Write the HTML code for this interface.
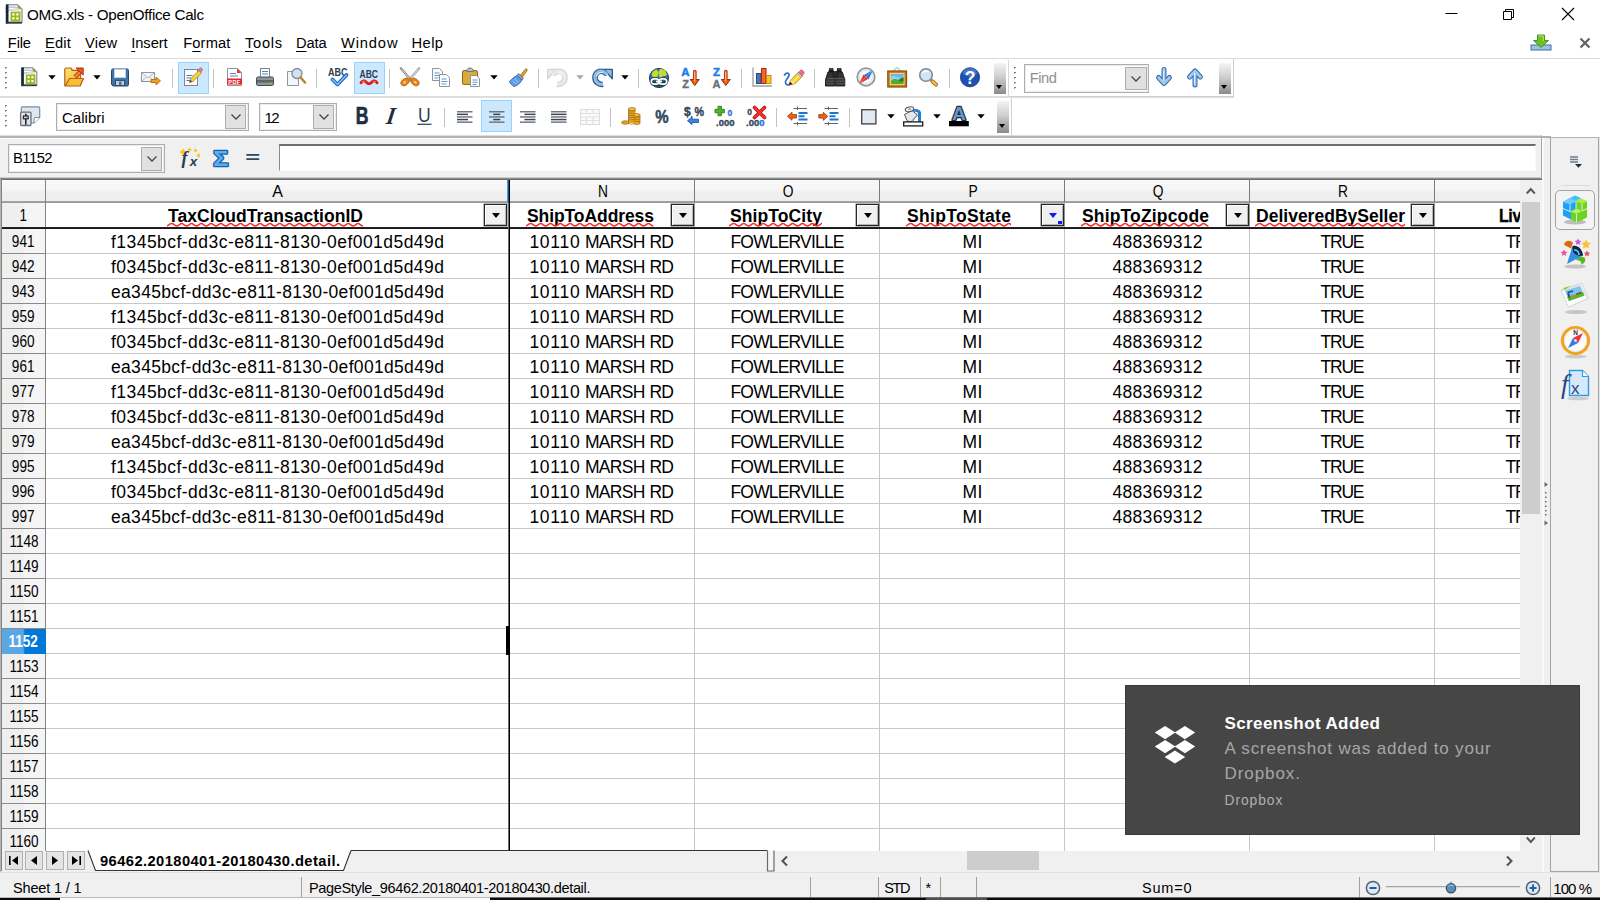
<!DOCTYPE html>
<html><head><meta charset="utf-8"><title>OMG.xls - OpenOffice Calc</title>
<style>
*{box-sizing:border-box;margin:0;padding:0}
html,body{width:1600px;height:900px;overflow:hidden;background:#fff}
body{position:relative;font-family:"Liberation Sans",sans-serif;color:#000;font-size:15px}
.a{position:absolute}
.t{position:absolute;white-space:nowrap;line-height:1}
u{text-decoration:underline;text-underline-offset:2.6px;text-decoration-thickness:1px}
#titlebar{left:0;top:0;width:1600px;height:30px;background:#fff}
#menubar{left:0;top:30px;width:1600px;height:28px;background:#fff}
.menu{top:36px;font-size:14.6px}
#tb1{left:0;top:59px;width:1600px;height:38px;background:#fff}
#tb2{left:0;top:96px;width:1600px;height:40px;background:#fff}
#tbl{left:0;top:96px;width:1234px;height:2px;background:#dedede}
#fbar{left:0;top:135px;width:1542px;height:45px;background:#f0f0f0;border-top:1px solid #dedede;border-right:1px solid #a8a8a8;box-shadow:inset 0 2px 0 #b2b2b2,inset 0 3px 0 #fff}
.sep{position:absolute;width:1px;background:#c2c2c2}
.hl{position:absolute;background:#cce8ff;border:1px solid #99d1ff}
.combo{position:absolute;background:#fff;border:1px solid #abaeb5;box-shadow:inset 0 0 0 1px #ececec}
.cbtn{position:absolute;background:#e1e1e1;border:1px solid #adadad}
.cbtn svg{position:absolute;left:50%;top:50%;transform:translate(-50%,-50%)}
.ic{position:absolute;overflow:visible}
.grip{position:absolute;width:3px}
.ovf{position:absolute;width:12px;background:linear-gradient(#f4f4f4,#cfcfcf 45%,#8a8a8a)}
.ovf:after{content:"";position:absolute;left:2.3px;bottom:5px;border:3.5px solid transparent;border-top:4px solid #000;border-bottom:0}
/* grid */
#grid{left:0;top:179px;width:1520px;height:672px;background:#fff;overflow:hidden}
.vl{position:absolute;width:1px;background:#c8c8c8}
.hln{position:absolute;height:1px;background:#c8c8c8}
.rh{position:absolute;left:2px;width:43px;height:24px;background:linear-gradient(90deg,#f0f0f0 0,#f0f0f0 48%,#f6f6f6 52%,#f6f6f6);border-bottom:0}
.rn{position:absolute;left:2px;width:43px;text-align:center;font-size:15.8px;line-height:1;white-space:nowrap;color:#000}
.rn span{display:inline-block;transform:scaleX(.86);transform-origin:50% 50%}
.ch{position:absolute;top:2px;height:21px;background:linear-gradient(#f6f6f6,#ececec);text-align:center;font-size:15.2px}
.c{position:absolute;white-space:nowrap;line-height:1;font-size:17.5px;text-align:center;color:#000}
.hd{position:absolute;white-space:nowrap;line-height:1;font-size:17.5px;font-weight:bold;color:#000}
.dd{position:absolute;width:23px;height:22px;background:#f0f0f0;border:1px solid #262626;box-shadow:0 0 0 .6px rgba(40,40,40,.55),inset 1px 1px 0 #fff,inset -1px -1px 0 #b5b5b5}
.dd:after{content:"";position:absolute;left:6.7px;top:7.6px;border:4.7px solid transparent;border-top:5.4px solid #000;border-bottom:0}
.dd.f:after{border-top-color:#1616ff}
.dd.f:before{content:"";position:absolute;right:1px;bottom:1px;width:4px;height:3.5px;background:#1616ff}
.wv{position:absolute}
.sb{font-size:14.6px}
.sbd{position:absolute;top:877px;width:1px;height:20px;background:#a0a0a0}
</style></head><body>

<div class="a" id="titlebar"></div>
<svg class="ic" style="left:1440px;top:4px" width="150" height="22" viewBox="0 0 150 22">
<path d="M5.5 9.5h12" stroke="#000" stroke-width="1" fill="none"/>
<path d="M63.5 7.5h8v8h-8zM65.5 7.5v-2h8v8h-2" stroke="#000" stroke-width="1" fill="none"/>
<path d="M122 4l12 12M134 4l-12 12" stroke="#000" stroke-width="1.1" fill="none"/>
</svg>
<div class="a" id="menubar"></div>
<div class="a" id="tb1"></div><div class="a" id="tb2"></div><div class="a" id="tbl"></div><div class="a" id="fbar"></div>
<svg class="ic" style="left:5px;top:4px" width="18" height="20" viewBox="0 0 18 20">
<path d="M1.500 .8h11.500l4 4v14.200h-15.500z" fill="#fdfdfd" stroke="#6d7780" stroke-width="1"/>
<path d="M12.500 .8l4.500 4.500h-4.500z" fill="#8aa626"/>
<path d="M0 4.500c4-1.500 8-2 12.500-.5M0 8c4-2.500 8-3 14-1.500" fill="none" stroke="#c3cbd2" stroke-width="1.600"/>
<rect x=".8" y=".5" width="2.700" height="19" fill="#10243b"/>
<rect x=".8" y="17.700" width="16" height="1.800" fill="#2b3b4c"/>
<rect x="5.500" y="7.500" width="10" height="10" fill="#9ab81c"/>
<path d="M5.500 7.500c2-2.500 6-3.500 10-2.500v2.500z" fill="#dfe5ea" opacity=".85"/>
<rect x="7.300" y="9.300" width="2.200" height="2.200" fill="#fff"/><rect x="11.300" y="9.300" width="2.200" height="2.200" fill="#fff"/>
<rect x="7.300" y="13.300" width="2.200" height="2.200" fill="#fff"/><rect x="11.300" y="13.300" width="2.200" height="2.200" fill="#fff"/>
</svg>
<svg class="ic" style="left:1530px;top:34px" width="22" height="18" viewBox="0 0 22 18">
<rect x="1" y="11" width="20" height="5" fill="#9cc3e6" stroke="#3f6f9f"/>
<path d="M7.500 1h7v5.500h4l-7.500 7-7.500-7h4z" fill="#6cc024" stroke="#3f8f12" stroke-width=".9" stroke-linejoin="round"/>
<path d="M8.700 2h4.600v5" fill="none" stroke="#b6e67a" stroke-width="1"/>
</svg>
<svg class="ic" style="left:1579px;top:37px" width="12" height="12" viewBox="0 0 12 12"><path d="M1.500 1.500l9 9M10.500 1.500l-9 9" stroke="#5d6770" stroke-width="2.300"/></svg>
<div class="a" style="left:0;top:58px;width:1600px;height:1px;background:#dadada"></div>
<svg class="ic" style="left:5px;top:67px" width="3" height="25" viewBox="0 0 3 25"><rect x="0" y="0" width="2" height="1" fill="#7c7c7c"/><rect x="0" y="1" width="1" height="1" fill="#a2a2a2"/><rect x="0" y="5" width="2" height="1" fill="#7c7c7c"/><rect x="0" y="6" width="1" height="1" fill="#a2a2a2"/><rect x="0" y="10" width="2" height="1" fill="#7c7c7c"/><rect x="0" y="11" width="1" height="1" fill="#a2a2a2"/><rect x="0" y="15" width="2" height="1" fill="#7c7c7c"/><rect x="0" y="16" width="1" height="1" fill="#a2a2a2"/><rect x="0" y="20" width="2" height="1" fill="#7c7c7c"/><rect x="0" y="21" width="1" height="1" fill="#a2a2a2"/></svg>
<svg class="ic" style="left:19px;top:67px" width="20" height="20" viewBox="0 0 20 20">
<g transform="translate(1.5 0) scale(.96 .98)">
<path d="M1.500 .8h11.500l4 4v14.200h-15.500z" fill="#fdfdfd" stroke="#6d7780" stroke-width="1"/>
<path d="M12.500 .8l4.500 4.500h-4.500z" fill="#8aa626"/>
<path d="M0 4.500c4-1.500 8-2 12.500-.5M0 8c4-2.500 8-3 14-1.500" fill="none" stroke="#c3cbd2" stroke-width="1.600"/>
<rect x=".8" y=".5" width="2.700" height="19" fill="#10243b"/>
<rect x=".8" y="17.700" width="16" height="1.800" fill="#2b3b4c"/>
<rect x="5.500" y="7.500" width="10" height="10" fill="#9ab81c"/>
<path d="M5.500 7.500c2-2.500 6-3.500 10-2.500v2.500z" fill="#dfe5ea" opacity=".85"/>
<rect x="7.300" y="9.300" width="2.200" height="2.200" fill="#fff"/><rect x="11.300" y="9.300" width="2.200" height="2.200" fill="#fff"/>
<rect x="7.300" y="13.300" width="2.200" height="2.200" fill="#fff"/><rect x="11.300" y="13.300" width="2.200" height="2.200" fill="#fff"/>
</g>
</svg>
<svg class="ic" style="left:48px;top:75px" width="8" height="5" viewBox="0 0 8 5"><path d="M0.3 0.3h7.4L4 4.4z" fill="#000"/></svg>
<svg class="ic" style="left:64px;top:67px" width="20" height="20" viewBox="0 0 20 20">
<defs><linearGradient id="gfo" x1="0" y1="0" x2="1" y2="1"><stop offset="0" stop-color="#fde77a"/><stop offset="1" stop-color="#f3ad24"/></linearGradient></defs>
<path d="M.8 2.500c0-1 .5-1.500 1.500-1.500h4.200c1 0 1.500.5 1.500 1.500v.8h7c1 0 1.500.5 1.500 1.500v13.700h-15.700z" fill="url(#gfo)" stroke="#b35f14" stroke-width="1.200"/>
<path d="M1.200 19l4.300-7.500h14l-3.500 7.500z" fill="#f7c034" stroke="#b35f14" stroke-width="1.200" stroke-linejoin="round"/>
<path d="M11 10l6-6" stroke="#c8401a" stroke-width="4.200"/>
<path d="M11 10l6-6" stroke="#f58a3c" stroke-width="2"/>
<path d="M12 1h7.200v7.200z" fill="#e85a22" stroke="#b5321a" stroke-width="1" stroke-linejoin="round"/>
</svg>
<svg class="ic" style="left:93px;top:75px" width="8" height="5" viewBox="0 0 8 5"><path d="M0.3 0.3h7.4L4 4.4z" fill="#000"/></svg>
<svg class="ic" style="left:110px;top:67px" width="20" height="20" viewBox="0 0 20 20">
<path d="M1.500 3.500c0-1 .5-1.500 1.500-1.500h14c1 0 1.500.5 1.500 1.500v14c0 1-.5 1.500-1.500 1.500h-14l-1.500-1.500z" fill="#3f73a6" stroke="#1f4a75"/>
<rect x="4.500" y="2.500" width="11" height="8" fill="#fff" stroke="#c5d3e0"/>
<rect x="5.500" y="13.500" width="9" height="5" fill="#c9ccd0" stroke="#2a527c"/>
<rect x="9" y="14.500" width="2.500" height="3.500" fill="#3f73a6"/>
</svg>
<svg class="ic" style="left:141px;top:67px" width="20" height="20" viewBox="0 0 20 20">
<rect x="0.500" y="5.500" width="13" height="9" fill="#f2f4f6" stroke="#8e979f"/>
<path d="M1 6l6 5 6-5M1 14l4.500-4M13 14l-4.500-4" fill="none" stroke="#a9b1b8" stroke-width=".9"/>
<path d="M10 12.500h5v-2.500l4.500 4-4.500 4v-2.500h-5z" fill="#f2a01e" stroke="#b46a0c" stroke-width=".9"/>
</svg>
<div class="sep" style="left:172px;top:69px;height:19px"></div>
<div class="hl" style="left:178px;top:62px;width:31px;height:32px"></div>
<svg class="ic" style="left:183px;top:67px" width="20" height="20" viewBox="0 0 20 20">
<rect x="1.500" y="2.500" width="13" height="16" fill="#fbfbfb" stroke="#7c8792"/>
<path d="M3.500 8.500h6M3.500 11h5M3.500 13.500h4" stroke="#3a7fc4" stroke-width="1.200"/>
<path d="M6.500 15.500l1.200-3.700 8.300-8.300 2.500 2.500-8.300 8.300z" fill="#f6d33b" stroke="#a8801a" stroke-width=".8"/>
<path d="M15.200 2.700l1.300-1.300c.7-.7 1.600-.7 2.300 0s.9 1.600.2 2.300l-1.300 1.300z" fill="#ee7d8c" stroke="#b84c5a" stroke-width=".7"/>
<path d="M6.500 15.500l.9-2.600 1.700 1.700z" fill="#3a2b1a"/>
</svg>
<div class="sep" style="left:213px;top:69px;height:19px"></div>
<svg class="ic" style="left:225px;top:67px" width="20" height="20" viewBox="0 0 20 20">
<path d="M2.500 1.500h10l4 4v13h-14z" fill="#fff" stroke="#8b949c"/>
<path d="M12 1.500l4.500 4.500h-4.500z" fill="#e5342b"/>
<path d="M5 6.500h6M5 9h8" stroke="#4d8ccc" stroke-width="1.200"/>
<rect x="2" y="11.500" width="15" height="6" fill="#e8242a"/>
<text x="9.500" y="16.600" font-family="Liberation Sans,sans-serif" font-size="5.600" font-weight="bold" fill="#fff" text-anchor="middle" letter-spacing=".4">PDF</text>
</svg>
<svg class="ic" style="left:255px;top:67px" width="20" height="20" viewBox="0 0 20 20">
<rect x="5.500" y="1.500" width="9" height="9" fill="#fff" stroke="#7e8790"/>
<path d="M7 4.500h6M7 7h6" stroke="#4a8bcf" stroke-width="1.200"/>
<path d="M1.500 11.500c0-1 .5-1.500 1.500-1.500h14c1 0 1.500.5 1.500 1.500v5.500c0 1-.5 1.500-1.500 1.500h-14c-1 0-1.500-.5-1.500-1.500z" fill="#8d949a" stroke="#454b50"/>
<rect x="2" y="13" width="16" height="2.500" fill="#5d6368"/>
<rect x="14.500" y="15.800" width="2" height="1.500" fill="#6fe02a"/>
</svg>
<svg class="ic" style="left:286px;top:67px" width="20" height="20" viewBox="0 0 20 20">
<path d="M1.500 4.500h8l3 3v11h-11z" fill="#f4f6f8" stroke="#8d969e"/>
<circle cx="11" cy="6.500" r="5" fill="#cfe3f5" stroke="#7f8a94" stroke-width="1.300"/>
<path d="M14.500 10.500l4.500 5" stroke="#b8862b" stroke-width="2.600" stroke-linecap="round"/>
</svg>
<div class="sep" style="left:316px;top:69px;height:19px"></div>
<svg class="ic" style="left:328px;top:67px" width="20" height="20" viewBox="0 0 20 20">
<text x="0" y="9" font-family="Liberation Sans,sans-serif" font-size="10.500" font-weight="bold" fill="#2c3e50" textLength="19.500" lengthAdjust="spacingAndGlyphs">ABC</text>
<path d="M4.500 12.500l5 5 9-9.500" fill="none" stroke="#1f66c8" stroke-width="3.800" stroke-linecap="round" stroke-linejoin="round"/>
<path d="M4.500 12.500l5 5 9-9.500" fill="none" stroke="#7cc4fa" stroke-width="1.500" stroke-linecap="round" stroke-linejoin="round"/>
</svg>
<div class="hl" style="left:354px;top:62px;width:31px;height:32px"></div>
<svg class="ic" style="left:359px;top:67px" width="20" height="20" viewBox="0 0 20 20">
<text x="0.500" y="10.800" font-family="Liberation Sans,sans-serif" font-size="10" font-weight="bold" fill="#2c3e50" textLength="18.500" lengthAdjust="spacingAndGlyphs">ABC</text>
<path d="M2 15.800c1.500-2.300 3.500-2.300 5-.8s2 1.800 3 1.800 1.500-.3 3-1.800 3.500-1.500 5 .8" fill="none" stroke="#e01818" stroke-width="2.800" stroke-linecap="round"/>
<path d="M3 15c1.500-1.300 2.500-1 3.500-.3M13.500 14.700c1.200-.8 2.500-.8 3.500.3" fill="none" stroke="#ff7a5a" stroke-width="1"/>
</svg>
<div class="sep" style="left:389px;top:69px;height:19px"></div>
<svg class="ic" style="left:400px;top:67px" width="20" height="20" viewBox="0 0 20 20">
<path d="M1 1.500l10 11.500" stroke="#8a9197" stroke-width="2.600" stroke-linecap="round"/>
<path d="M19 1.500l-10 11.500" stroke="#a5abb0" stroke-width="2.600" stroke-linecap="round"/>
<path d="M1.300 1.800l8 9.300M18.700 1.800l-8 9.300" stroke="#e3e6e8" stroke-width=".8"/>
<ellipse cx="5" cy="15" rx="4.600" ry="3.200" transform="rotate(-38 5 15)" fill="#e8861a" stroke="#b8610c" stroke-width=".8"/>
<ellipse cx="15" cy="15" rx="4.600" ry="3.200" transform="rotate(38 15 15)" fill="#e8861a" stroke="#b8610c" stroke-width=".8"/>
<ellipse cx="4.700" cy="15.300" rx="1.500" ry="1" transform="rotate(-38 4.700 15.300)" fill="#f7d9b0"/>
<ellipse cx="15.300" cy="15.300" rx="1.500" ry="1" transform="rotate(38 15.300 15.300)" fill="#f7d9b0"/>
<path d="M8 12l2-2 2 2-2 2z" fill="#d87914"/>
</svg>
<svg class="ic" style="left:431px;top:67px" width="20" height="20" viewBox="0 0 20 20">
<path d="M1.500 1.500h7l3 3v9h-10z" fill="#fdfdfd" stroke="#8c959d"/>
<path d="M3.500 6h5M3.500 8.500h5M3.500 11h4" stroke="#5b9ad5" stroke-width="1.100"/>
<path d="M8.500 7.500h7l3 3v9h-10z" fill="#fdfdfd" stroke="#8c959d"/>
<path d="M10.500 12h5M10.500 14.500h6M10.500 17h5" stroke="#5b9ad5" stroke-width="1.100"/>
</svg>
<svg class="ic" style="left:461px;top:67px" width="20" height="20" viewBox="0 0 20 20">
<rect x="1.500" y="3.500" width="15" height="14" rx="1.500" fill="#d9a93a" stroke="#8f6a1c"/>
<path d="M5.500 4.500c0-2 1.500-3.500 3.500-3.500s3.500 1.500 3.500 3.500z" fill="#b9bfc5" stroke="#6d757c"/>
<path d="M9.500 8.500h6l3 3v8h-9z" fill="#fdfdfd" stroke="#8c959d"/>
<path d="M11.500 13h5M11.500 15.300h5M11.500 17.500h4" stroke="#5b9ad5" stroke-width="1.100"/>
</svg>
<svg class="ic" style="left:490px;top:75px" width="8" height="5" viewBox="0 0 8 5"><path d="M0.3 0.3h7.4L4 4.4z" fill="#000"/></svg>
<svg class="ic" style="left:508px;top:67px" width="20" height="20" viewBox="0 0 20 20">
<path d="M12.500 8l5.500-6.500 1.500 1.500-5 7z" fill="#d9a62c" stroke="#94701a" stroke-width=".8"/>
<path d="M10.500 6.500l5 4.500-1.500 2-5-4.500z" fill="#9aa3ab" stroke="#5e666d" stroke-width=".8"/>
<path d="M9 8.500l5 4.500c-2 3.500-5 6-8 6.500-2-1-4-3-4.500-5 2-2.500 4.500-4.500 7.500-6z" fill="#5e9fe6" stroke="#2f69b0" stroke-width=".9"/>
<path d="M5 14l3 3M7 12l3.500 3.500" stroke="#a9cdf5" stroke-width=".9"/>
</svg>
<div class="sep" style="left:538px;top:69px;height:19px"></div>
<svg class="ic" style="left:548px;top:67px" width="20" height="20" viewBox="0 0 20 20"><g transform="translate(20 0) scale(-1 1)">
<path d="M11 17.200c-4.500.8-8-2.500-8-6.800 0-4.500 4.500-7.500 9-5.500l3 2.500" fill="none" stroke="#d2d5d8" stroke-width="5.600" stroke-linejoin="round"/>
<path d="M12 2.300h8.300v9.500z" fill="#e8eaec" stroke="#d2d5d8" stroke-width="1.300" stroke-linejoin="round"/>
<path d="M11 17.200c-4.500.8-8-2.500-8-6.800 0-4.500 4.500-7.500 9-5.500l3.500 3" fill="none" stroke="#e8eaec" stroke-width="3.400"/>
<path d="M4.500 9.500c.5-3 3.500-4.800 6.500-4" fill="none" stroke="#f4f5f6" stroke-width="1.200"/>
</g></svg>
<svg class="ic" style="left:576px;top:75px" width="8" height="5" viewBox="0 0 8 5"><path d="M0.3 0.3h7.4L4 4.4z" fill="#a8a8a8"/></svg>
<svg class="ic" style="left:592px;top:67px" width="20" height="20" viewBox="0 0 20 20">
<path d="M11 17.200c-4.500.8-8-2.500-8-6.800 0-4.500 4.500-7.500 9-5.500l3 2.500" fill="none" stroke="#2d5a87" stroke-width="5.600" stroke-linejoin="round"/>
<path d="M12 2.300h8.300v9.500z" fill="#8dbde8" stroke="#2d5a87" stroke-width="1.300" stroke-linejoin="round"/>
<path d="M11 17.200c-4.500.8-8-2.500-8-6.800 0-4.500 4.500-7.500 9-5.500l3.500 3" fill="none" stroke="#8dbde8" stroke-width="3.400"/>
<path d="M4.500 9.500c.5-3 3.500-4.800 6.500-4" fill="none" stroke="#d4e8fa" stroke-width="1.200"/>
</svg>
<svg class="ic" style="left:621px;top:75px" width="8" height="5" viewBox="0 0 8 5"><path d="M0.3 0.3h7.4L4 4.4z" fill="#000"/></svg>
<div class="sep" style="left:638px;top:69px;height:19px"></div>
<svg class="ic" style="left:649px;top:67px" width="20" height="20" viewBox="0 0 20 20">
<g transform="translate(0 1)">
<circle cx="10" cy="10" r="9.600" fill="#2f6fb8" stroke="#1d3f66" stroke-width="1"/>
<path d="M2.500 6c1-2.500 3-4 5-4.500l2 2.500 1.500-3c2 0 4 .5 5.500 2l1.500 3.500c-1 1.500-2.500 2-4 1.500l-1.500 1.500c-1.500.5-3 0-3.500-1.500l-2 1.500c-2 .5-3.500-.5-4.500-3.500z" fill="#c3de2a"/>
<path d="M9.500 4l1 5-1 2.500-.8-3.500z" fill="#3f86d1"/>
<path d="M2 13c1 3 3.500 5.500 8 6.500 4.500-1 7-3.500 8-6.500z" fill="#1f4a2a" opacity=".8"/>
<rect x="2.300" y="10.800" width="7.500" height="5.400" rx="2.700" fill="none" stroke="#22384f" stroke-width="3"/>
<rect x="10.200" y="10.800" width="7.500" height="5.400" rx="2.700" fill="none" stroke="#22384f" stroke-width="3"/>
<rect x="2.300" y="10.800" width="7.500" height="5.400" rx="2.700" fill="none" stroke="#fff" stroke-width="1.700"/>
<rect x="10.200" y="10.800" width="7.500" height="5.400" rx="2.700" fill="none" stroke="#fff" stroke-width="1.700"/>
<path d="M7 13.500h6" stroke="#fff" stroke-width="1.700"/>
</g>
</svg>
<svg class="ic" style="left:681px;top:67px" width="20" height="20" viewBox="0 0 20 20">
<text x="4.500" y="9.300" font-family="Liberation Sans,sans-serif" font-size="11.500" font-weight="bold" fill="#1880e8" stroke="#1880e8" stroke-width=".5" text-anchor="middle">A</text>
<text x="4.500" y="20.500" font-family="Liberation Sans,sans-serif" font-size="11" font-weight="bold" fill="#66717b" stroke="#66717b" stroke-width=".4" text-anchor="middle">Z</text>

<path d="M13.800 4.500v10" stroke="#a3280c" stroke-width="3.600" stroke-linecap="round"/>
<path d="M9.300 12.500l4.500 6 4.500-6z" fill="#e0521a" stroke="#a3280c" stroke-width="1" stroke-linejoin="round"/>
<path d="M13.800 4.500v11" stroke="#f5761f" stroke-width="2" stroke-linecap="round"/>
<path d="M13.600 5v9" stroke="#ffd9b0" stroke-width=".7"/>
</svg>
<svg class="ic" style="left:712px;top:67px" width="20" height="20" viewBox="0 0 20 20">
<text x="4.500" y="9.300" font-family="Liberation Sans,sans-serif" font-size="11.500" font-weight="bold" fill="#1880e8" stroke="#1880e8" stroke-width=".5" text-anchor="middle">Z</text>
<text x="4.500" y="20.500" font-family="Liberation Sans,sans-serif" font-size="11" font-weight="bold" fill="#66717b" stroke="#66717b" stroke-width=".4" text-anchor="middle">A</text>

<path d="M13.800 4.500v10" stroke="#a3280c" stroke-width="3.600" stroke-linecap="round"/>
<path d="M9.300 12.500l4.500 6 4.500-6z" fill="#e0521a" stroke="#a3280c" stroke-width="1" stroke-linejoin="round"/>
<path d="M13.800 4.500v11" stroke="#f5761f" stroke-width="2" stroke-linecap="round"/>
<path d="M13.600 5v9" stroke="#ffd9b0" stroke-width=".7"/>
</svg>
<div class="sep" style="left:741px;top:69px;height:19px"></div>
<svg class="ic" style="left:752px;top:67px" width="20" height="20" viewBox="0 0 20 20">
<path d="M1 0.500v18.500h19" fill="none" stroke="#9aa1a8" stroke-width="1.300"/>
<rect x="4.500" y="6.500" width="4.500" height="10" fill="#3f78b5" stroke="#264f7d"/>
<rect x="9.500" y="1.500" width="4.500" height="15" fill="#f26a1b" stroke="#b31e14"/>
<rect x="14.500" y="8.500" width="4.500" height="8" fill="#f7c62f" stroke="#c48e12"/>
</svg>
<svg class="ic" style="left:783px;top:67px" width="20" height="20" viewBox="0 0 20 20">
<path d="M1.500 8c1.500-2.500 5-2.500 4.500.5s-4.500 4.500-3.500 7.500 4 2 6 .5" fill="none" stroke="#2d6fd1" stroke-width="1.700" stroke-linecap="round"/>
<path d="M6 18l1.500-4.800 8-8 4 4-8 8z" fill="#f7d52e" stroke="#a8801a" stroke-width=".8"/>
<path d="M9.500 15.500l8-8" stroke="#fbe98a" stroke-width="1.200"/>
<path d="M14.300 6.400l1.200-1.200 4 4-1.200 1.200z" fill="#c9cdd1" stroke="#7f868c" stroke-width=".5"/>
<path d="M15.500 5.200l1.500-1.500c.8-.8 2-.8 2.900 0l.6.600c.8.900.8 2.100 0 2.900l-1.500 1.500z" fill="#ee6d83" stroke="#b84c5a" stroke-width=".7"/>
<path d="M6 18l1.100-3.600 2.500 2.500z" fill="#2a1c10"/>
<path d="M7.100 14.400l1-.8 3.400 3.400-.9.900z" fill="#f3dfc0"/>
</svg>
<div class="sep" style="left:814px;top:69px;height:19px"></div>
<svg class="ic" style="left:825px;top:67px" width="20" height="20" viewBox="0 0 20 20">
<path d="M3.500 5l.7-4h4l.7 4zM11.500 5l.7-4h4l.7 4z" fill="#1e1f21"/>
<path d="M3 5h6.500l.3 14h-9.300v-6.500zM10.800 5h6.500l2.500 7.500v6.500h-9.300z" fill="#323437" stroke="#151617" stroke-width=".9" stroke-linejoin="round"/>
<rect x="8" y="4.500" width="4.500" height="5.500" fill="#2a2b2d" stroke="#151617" stroke-width=".6"/>
<path d="M1 14.200h8.500M10.800 14.200h8.700M1 16.800h8.500M10.800 16.800h8.700M2 11.500h7.500M10.800 11.500h8" stroke="#6a6d71" stroke-width=".7"/>
<path d="M4.500 2h3M12.500 2h3" stroke="#77797c" stroke-width=".8"/>
</svg>
<svg class="ic" style="left:856px;top:67px" width="20" height="20" viewBox="0 0 20 20">
<circle cx="10" cy="10" r="8.800" fill="#f6f8fa" stroke="#8f989f" stroke-width="1.700"/>
<circle cx="10" cy="10" r="6.800" fill="none" stroke="#c3c9ce" stroke-width="1.400" stroke-dasharray="1 1.670"/>
<path d="M17 3l-4.500 9.500-4.500-4.500z" fill="#2f6fe0"/>
<path d="M3 17l4.500-9.500 4.500 4.500z" fill="#f02a2a"/>
<path d="M17 3l-7 7M3 17l7-7" stroke="#fff" stroke-width=".6" opacity=".6"/>
</svg>
<svg class="ic" style="left:887px;top:67px" width="20" height="20" viewBox="0 0 20 20">
<path d="M6 4l4-3.500 4 3.500" fill="none" stroke="#9aa1a7" stroke-width="1"/>
<rect x=".8" y="4" width="18.700" height="16" fill="#c87f1e" stroke="#8b4e0e" stroke-width="1.200"/>
<rect x="3.300" y="6.500" width="13.700" height="11" fill="#8fd0f5" stroke="#f5cd72" stroke-width="1.100"/>
<path d="M4 10c2-1.500 4-1.500 6 0s4 .5 6.500-.5v-2.500h-12.500z" fill="#6cb8ee"/>
<path d="M4 14c2-2 4-2.500 6-1.500s4-.5 6.500-2v6.500h-12.500z" fill="#4fae2f"/>
<path d="M12 13c1.500-2 3-2.500 4.500-2.500v4h-4.500z" fill="#2f7a22"/>
</svg>
<svg class="ic" style="left:918px;top:67px" width="20" height="20" viewBox="0 0 20 20">
<circle cx="8" cy="8" r="6.300" fill="#cfe5f7" stroke="#7f8a94" stroke-width="1.600"/>
<path d="M4.500 6c1.500-2.300 4.500-2.500 6-.8" fill="none" stroke="#fff" stroke-width="1.300"/>
<path d="M12.500 12.500l2 2" stroke="#7f8a94" stroke-width="2"/>
<path d="M14.500 14.500l3.500 3" stroke="#a9741a" stroke-width="4.200" stroke-linecap="round"/>
<path d="M14.500 14.500l3.500 3" stroke="#f2c14a" stroke-width="2.200" stroke-linecap="round"/>
</svg>
<div class="sep" style="left:949px;top:69px;height:19px"></div>
<svg class="ic" style="left:960px;top:67px" width="20" height="20" viewBox="0 0 20 20">
<circle cx="10" cy="10.300" r="9.600" fill="#1f4fb0" stroke="#173a85" stroke-width=".8"/>
<ellipse cx="10" cy="5.500" rx="7" ry="4" fill="#5f8fe0" opacity=".6"/>
<text x="10" y="16.500" font-family="Liberation Sans,sans-serif" font-size="17.500" font-weight="bold" fill="#fff" text-anchor="middle">?</text>
</svg>
<div class="ovf" style="left:994px;top:63px;height:31px"></div>
<div class="a" style="left:1008px;top:60px;width:1px;height:37px;background:#d8d8d8"></div>
<div class="a" style="left:1009px;top:59px;width:225px;height:38px;border-right:1px solid #d0d0d0;border-bottom:1px solid #d0d0d0"></div>
<svg class="ic" style="left:1014px;top:67px" width="3" height="25" viewBox="0 0 3 25"><rect x="0" y="0" width="2" height="1" fill="#7c7c7c"/><rect x="0" y="1" width="1" height="1" fill="#a2a2a2"/><rect x="0" y="5" width="2" height="1" fill="#7c7c7c"/><rect x="0" y="6" width="1" height="1" fill="#a2a2a2"/><rect x="0" y="10" width="2" height="1" fill="#7c7c7c"/><rect x="0" y="11" width="1" height="1" fill="#a2a2a2"/><rect x="0" y="15" width="2" height="1" fill="#7c7c7c"/><rect x="0" y="16" width="1" height="1" fill="#a2a2a2"/><rect x="0" y="20" width="2" height="1" fill="#7c7c7c"/><rect x="0" y="21" width="1" height="1" fill="#a2a2a2"/></svg>
<div class="combo" style="left:1024px;top:64px;width:125px;height:29px"></div>
<div class="cbtn" style="left:1125px;top:67px;width:22px;height:23px"><svg width="11" height="7" viewBox="0 0 11 7"><path d="M1 1l4.5 4.5L10 1" fill="none" stroke="#444" stroke-width="1.3"/></svg></div>
<svg class="ic" style="left:1154px;top:67px" width="20" height="20" viewBox="0 0 20 20">
<path d="M10 2.500v10M4.500 10.500l5.500 6 5.500-6" fill="none" stroke="#3a6ea5" stroke-width="5" stroke-linecap="round" stroke-linejoin="round"/>
<path d="M10 2.500v10M4.500 10.500l5.500 6 5.500-6" fill="none" stroke="#9ecbf3" stroke-width="2.800" stroke-linecap="round" stroke-linejoin="round"/>
<path d="M9.500 3v11" stroke="#d8ecfc" stroke-width="1"/>
</svg>
<svg class="ic" style="left:1185px;top:67px" width="20" height="20" viewBox="0 0 20 20">
<path d="M10 18v-10M4.500 10l5.500-6 5.500 6" fill="none" stroke="#3a6ea5" stroke-width="5" stroke-linecap="round" stroke-linejoin="round"/>
<path d="M10 18v-10M4.500 10l5.500-6 5.500 6" fill="none" stroke="#9ecbf3" stroke-width="2.800" stroke-linecap="round" stroke-linejoin="round"/>
<path d="M9.500 17v-11" stroke="#d8ecfc" stroke-width="1"/>
</svg>
<div class="ovf" style="left:1219px;top:63px;height:31px"></div>
<svg class="ic" style="left:5px;top:105px" width="3" height="25" viewBox="0 0 3 25"><rect x="0" y="0" width="2" height="1" fill="#7c7c7c"/><rect x="0" y="1" width="1" height="1" fill="#a2a2a2"/><rect x="0" y="5" width="2" height="1" fill="#7c7c7c"/><rect x="0" y="6" width="1" height="1" fill="#a2a2a2"/><rect x="0" y="10" width="2" height="1" fill="#7c7c7c"/><rect x="0" y="11" width="1" height="1" fill="#a2a2a2"/><rect x="0" y="15" width="2" height="1" fill="#7c7c7c"/><rect x="0" y="16" width="1" height="1" fill="#a2a2a2"/><rect x="0" y="20" width="2" height="1" fill="#7c7c7c"/><rect x="0" y="21" width="1" height="1" fill="#a2a2a2"/></svg>
<svg class="ic" style="left:20px;top:106px" width="20" height="20" viewBox="0 0 20 20">
<path d="M2.500 .8h16c.7 0 1.200.5 1.200 1.200v9.500l-5.500 5.500h-11.700c-.7 0-1.200-.5-1.200-1.200v-13.800c0-.7.5-1.200 1.200-1.200z" fill="#dfe7ee" stroke="#7f8b99" stroke-width="1.200"/>
<path d="M14.200 17v-4.300c0-.7.5-1.200 1.200-1.200h4.300" fill="#fbfcfd" stroke="#7f8b99" stroke-width="1.100"/>
<path d="M14.800 16.200v-3.500c0-.4.300-.7.700-.7h3.500z" fill="#fff"/>
<rect x=".6" y="6.200" width="10.400" height="13.300" rx="1" fill="#dfe3e6" stroke="#66727f" stroke-width="1.300"/>
<path d="M5.800 8.300v10" stroke="#1b1f24" stroke-width="1.500" stroke-linecap="round"/>
<rect x="3.400" y="10" width="4.800" height="2.800" fill="#c9cdd1" stroke="#1b1f24" stroke-width="1.100"/>
</svg>
<div class="combo" style="left:56px;top:103px;width:193px;height:28px"></div>
<div class="cbtn" style="left:225px;top:105px;width:21px;height:24px"><svg width="11" height="7" viewBox="0 0 11 7"><path d="M1 1l4.5 4.5L10 1" fill="none" stroke="#444" stroke-width="1.3"/></svg></div>
<div class="combo" style="left:259px;top:103px;width:78px;height:28px"></div>
<div class="cbtn" style="left:313px;top:105px;width:21px;height:24px"><svg width="11" height="7" viewBox="0 0 11 7"><path d="M1 1l4.5 4.5L10 1" fill="none" stroke="#444" stroke-width="1.3"/></svg></div>
<svg class="ic" style="left:352px;top:106px" width="20" height="20" viewBox="0 0 20 20"><text x="0" y="18.200" font-family="Liberation Sans,sans-serif" font-size="23.200" font-weight="bold" fill="#1c2f42" stroke="#1c2f42" stroke-width=".7" transform="translate(3.800 0) scale(.76 1)">B</text></svg>
<svg class="ic" style="left:383px;top:106px" width="20" height="20" viewBox="0 0 20 20"><text x="0" y="18.200" font-family="Liberation Serif,serif" font-size="24.500" font-weight="bold" font-style="italic" fill="#1c2f42" transform="translate(5.500 0) skewX(-9) scale(.9 1)">I</text></svg>
<svg class="ic" style="left:414px;top:106px" width="20" height="20" viewBox="0 0 20 20"><text x="10.400" y="16" font-family="Liberation Sans,sans-serif" font-size="19.500" fill="#2a3f54" text-anchor="middle" transform="translate(10.400 0) scale(.9 1) translate(-10.400 0)">U</text><path d="M3.500 18.300h14" stroke="#2a3f54" stroke-width="1.200"/></svg>
<div class="sep" style="left:444px;top:108px;height:19px"></div>
<svg class="ic" style="left:455px;top:106px" width="20" height="20" viewBox="0 0 20 20"><rect x="2" y="5.00" width="15.5" height="1.500" fill="#70787f"/><rect x="2" y="7.60" width="11" height="1.500" fill="#3d4650"/><rect x="2" y="10.20" width="15.5" height="1.500" fill="#70787f"/><rect x="2" y="12.80" width="11" height="1.500" fill="#3d4650"/><rect x="2" y="15.40" width="15.5" height="1.500" fill="#70787f"/></svg>
<div class="hl" style="left:481px;top:100px;width:31px;height:32px"></div>
<svg class="ic" style="left:487px;top:106px" width="20" height="20" viewBox="0 0 20 20"><rect x="2.0" y="5.00" width="15.5" height="1.500" fill="#70787f"/><rect x="6.25" y="7.60" width="7" height="1.500" fill="#3d4650"/><rect x="2.0" y="10.20" width="15.5" height="1.500" fill="#70787f"/><rect x="6.25" y="12.80" width="7" height="1.500" fill="#3d4650"/><rect x="2.0" y="15.40" width="15.5" height="1.500" fill="#70787f"/></svg>
<svg class="ic" style="left:518px;top:106px" width="20" height="20" viewBox="0 0 20 20"><rect x="2.0" y="5.00" width="15.5" height="1.500" fill="#70787f"/><rect x="6.5" y="7.60" width="11" height="1.500" fill="#3d4650"/><rect x="2.0" y="10.20" width="15.5" height="1.500" fill="#70787f"/><rect x="6.5" y="12.80" width="11" height="1.500" fill="#3d4650"/><rect x="2.0" y="15.40" width="15.5" height="1.500" fill="#70787f"/></svg>
<svg class="ic" style="left:549px;top:106px" width="20" height="20" viewBox="0 0 20 20"><rect x="2" y="5.00" width="15.5" height="1.500" fill="#70787f"/><rect x="2" y="7.60" width="15.5" height="1.500" fill="#3d4650"/><rect x="2" y="10.20" width="15.5" height="1.500" fill="#70787f"/><rect x="2" y="12.80" width="15.5" height="1.500" fill="#3d4650"/><rect x="2" y="15.40" width="15.5" height="1.500" fill="#70787f"/></svg>
<svg class="ic" style="left:580px;top:106px" width="20" height="20" viewBox="0 0 20 20">
<rect x=".5" y="3.500" width="19" height="15" fill="#fafafa" stroke="#dcdcdc"/>
<path d="M.5 7.500h19M.5 11h19M.5 14.500h19M6.500 3.500v4M13 3.500v4M6.500 11v7.500M13 11v7.500" stroke="#e0e0e0" stroke-width="1.200"/>
</svg>
<div class="sep" style="left:610px;top:108px;height:19px"></div>
<svg class="ic" style="left:621px;top:106px" width="20" height="20" viewBox="0 0 20 20">
<ellipse cx="4.500" cy="16.500" rx="4" ry="1.700" fill="#e9a323" stroke="#a86f10" stroke-width=".8"/>
<rect x="7.500" y="3" width="7" height="14" fill="#eaa623"/>
<rect x="12.500" y="9" width="6.500" height="9" fill="#eaa623"/>
<path d="M7.500 5h7M7.500 7.200h7M7.500 9.400h7M7.500 11.600h7M7.500 13.800h7M12.500 11h6.500M12.500 13.200h6.500M12.500 15.400h6.500" stroke="#a86f10" stroke-width=".8"/>
<ellipse cx="11" cy="3" rx="3.500" ry="1.500" fill="#f7c654" stroke="#a86f10" stroke-width=".8"/>
<ellipse cx="15.800" cy="9" rx="3.300" ry="1.400" fill="#f7c654" stroke="#a86f10" stroke-width=".8"/>
<path d="M7.500 3v14c1 1.500 5 1.500 5 .5M19 9v8.500c-1 1.500-5.500 1.500-6.500 0" fill="none" stroke="#a86f10" stroke-width=".8"/>
</svg>
<svg class="ic" style="left:652px;top:106px" width="20" height="20" viewBox="0 0 20 20"><text x="10" y="17.500" font-family="Liberation Sans,sans-serif" font-size="17.500" font-weight="bold" fill="#33475a" stroke="#33475a" stroke-width=".5" text-anchor="middle" transform="translate(10 0) scale(.86 1) translate(-10 0)">%</text></svg>
<svg class="ic" style="left:684px;top:106px" width="20" height="20" viewBox="0 0 20 20">
<text x="0" y="10" font-family="Liberation Sans,sans-serif" font-size="12" font-weight="bold" fill="#33475a" stroke="#33475a" stroke-width=".4">$</text>
<text x="10.500" y="10" font-family="Liberation Sans,sans-serif" font-size="12" font-weight="bold" fill="#33475a" stroke="#33475a" stroke-width=".4" textLength="9.500" lengthAdjust="spacingAndGlyphs">%</text>
<text x="6.500" y="10.500" font-family="Liberation Sans,sans-serif" font-size="8" font-weight="bold" fill="#33475a">,</text>
<path d="M3.500 14.800l4.500-3.800v2.200h6.500v3.200h-6.500v2.200z" fill="#3d86e0" stroke="#1f55a3" stroke-width=".9" stroke-linejoin="round"/>
</svg>
<svg class="ic" style="left:715px;top:106px" width="20" height="20" viewBox="0 0 20 20">
<path d="M3 .3h3.400v3h3v3.400h-3v3h-3.400v-3h-3v-3.400h3z" fill="#4fb52a" stroke="#2c7d12" stroke-width=".9"/>
<text x="14.800" y="10" font-family="Liberation Sans,sans-serif" font-size="8.500" font-weight="bold" fill="#2f6fe0" stroke="#2f6fe0" stroke-width=".3" text-anchor="middle">0</text>
<text x="1" y="19.500" font-family="Liberation Sans,sans-serif" font-size="9" font-weight="bold" fill="#33475a" stroke="#33475a" stroke-width=".35" textLength="18.500" lengthAdjust="spacingAndGlyphs">.000</text>
</svg>
<svg class="ic" style="left:746px;top:106px" width="20" height="20" viewBox="0 0 20 20">
<text x="3.500" y="9" font-family="Liberation Sans,sans-serif" font-size="8.500" font-weight="bold" fill="#33475a" stroke="#33475a" stroke-width=".3" text-anchor="middle">0</text>
<text x="0" y="19.500" font-family="Liberation Sans,sans-serif" font-size="9" font-weight="bold" fill="#33475a" stroke="#33475a" stroke-width=".35" textLength="18.500" lengthAdjust="spacingAndGlyphs">.00<tspan fill="#2f6fe0" stroke="#2f6fe0">0</tspan></text>
<path d="M8.500 1.500l10 10M18.500 1.500l-10 10" stroke="#b81414" stroke-width="3.600" stroke-linecap="round"/>
<path d="M8.500 1.500l10 10M18.500 1.500l-10 10" stroke="#f03030" stroke-width="2.200" stroke-linecap="round"/>
</svg>
<div class="sep" style="left:776px;top:108px;height:19px"></div>
<svg class="ic" style="left:787px;top:106px" width="20" height="20" viewBox="0 0 20 20">
<path d="M10.500 .5v3.500M10.500 16v3.500" stroke="#5a6570" stroke-width="1"/>
<path d="M6.500 2.500h13.500M6.500 17.500h13.500" stroke="#5a6570" stroke-width="1"/>
<path d="M11.500 7h9M11.500 10.300h6M11.500 13.600h9" stroke="#1878d0" stroke-width="2"/>
<path d="M.5 10.300l4.500-4v2.300h4.500v3.400h-4.500v2.300z" fill="#e8641b" stroke="#a83f0a" stroke-width=".9" stroke-linejoin="round"/></svg>
<svg class="ic" style="left:818px;top:106px" width="20" height="20" viewBox="0 0 20 20">
<path d="M10.500 .5v3.500M10.500 16v3.500" stroke="#5a6570" stroke-width="1"/>
<path d="M6.500 2.500h13.500M6.500 17.500h13.500" stroke="#5a6570" stroke-width="1"/>
<path d="M11.500 7h9M11.500 10.300h6M11.500 13.600h9" stroke="#1878d0" stroke-width="2"/>
<path d="M9.800 10.300l-4.500-4v2.300h-4.500v3.400h4.500v2.300z" fill="#e8641b" stroke="#a83f0a" stroke-width=".9" stroke-linejoin="round"/></svg>
<div class="sep" style="left:849px;top:108px;height:19px"></div>
<svg class="ic" style="left:859px;top:106px" width="20" height="20" viewBox="0 0 20 20"><rect x="2.700" y="3.700" width="14.200" height="14.200" fill="#e3e9f0" stroke="#474c52" stroke-width="1.400"/></svg>
<svg class="ic" style="left:887px;top:114px" width="8" height="5" viewBox="0 0 8 5"><path d="M0.3 0.3h7.4L4 4.4z" fill="#000"/></svg>
<svg class="ic" style="left:903px;top:106px" width="20" height="20" viewBox="0 0 20 20">
<path d="M9.500 3.500c4-1.500 8 0 8.500 3v9.500h-3v-8c0-1.500-1.500-2.500-4-2z" fill="#2a7fc9"/>
<path d="M1.500 8.500l7.500-4 5.500 4.500-5 6c-1.500 1.200-4 .8-5.500-.5z" fill="#e6e9ec" stroke="#4b535b" stroke-width="1"/>
<path d="M8.500 14.500l5-5.800 1 .8-5 6z" fill="#9aa2a9"/>
<ellipse cx="6.500" cy="3.300" rx="4.300" ry="2.300" fill="#f4f6f7" stroke="#4b535b" stroke-width="1.100" transform="rotate(-12 6.500 3.300)"/>
<path d="M4.500 3.300l2-1 2 .8-2 1z" fill="#7d868e"/>
<rect x=".7" y="15.900" width="19" height="4" fill="#fff" stroke="#1a1a1a" stroke-width="1.300"/>
</svg>
<svg class="ic" style="left:933px;top:114px" width="8" height="5" viewBox="0 0 8 5"><path d="M0.3 0.3h7.4L4 4.4z" fill="#000"/></svg>
<svg class="ic" style="left:949px;top:106px" width="20" height="20" viewBox="0 0 20 20">
<text x="0" y="13.600" font-family="Liberation Sans,sans-serif" font-size="17.500" font-weight="bold" fill="#6b97c0" stroke="#17304a" stroke-width="2.300" stroke-linejoin="round" paint-order="stroke" transform="translate(3 0) scale(1.100 1)">A</text>
<rect x="0" y="15" width="19.800" height="5.300" fill="#000"/>
</svg>
<svg class="ic" style="left:977px;top:114px" width="8" height="5" viewBox="0 0 8 5"><path d="M0.3 0.3h7.4L4 4.4z" fill="#000"/></svg>
<div class="ovf" style="left:997px;top:101px;height:32px"></div>
<div class="a" style="left:1011px;top:98px;width:1px;height:38px;background:#d0d0d0"></div>
<div class="combo" style="left:8px;top:144px;width:157px;height:29px"></div>
<div class="cbtn" style="left:141px;top:147px;width:21px;height:24px"><svg width="11" height="7" viewBox="0 0 11 7"><path d="M1 1l4.5 4.5L10 1" fill="none" stroke="#444" stroke-width="1.3"/></svg></div>
<svg class="ic" style="left:179px;top:148px" width="20" height="20" viewBox="0 0 20 20">
<path d="M4 .8l3.200 3.200-3.200 3.200-3.200-3.200z" fill="#f7c81e"/>
<path d="M10.500-.8l1 1.800 2 .7-2 .7-1 1.800-1-1.800-2-.7 2-.7z" fill="#f7c81e"/>
<path d="M16.500 .5l2 2-2 2-2-2z" fill="#f7c81e"/>
<path d="M20 5l1.200 2.500-1.200 2.500-2.500-2.500z" fill="#f7c81e"/>
<text x="2.500" y="16.200" font-family="Liberation Serif,serif" font-size="18" font-style="italic" font-weight="bold" fill="#2b3d4f">f</text>
<text x="10.800" y="18" font-family="Liberation Sans,sans-serif" font-size="13.500" font-weight="bold" font-style="italic" fill="#2b3d4f">x</text>
</svg>
<svg class="ic" style="left:211px;top:148px" width="20" height="20" viewBox="0 0 20 20">
<text x="0" y="17.700" font-family="Liberation Sans,sans-serif" font-size="21.500" font-weight="bold" fill="#55b0f5" stroke="#1d5ea6" stroke-width="2.400" stroke-linejoin="round" paint-order="stroke" transform="translate(2.200 0) scale(1.160 1)">&#931;</text>
</svg>
<svg class="ic" style="left:244px;top:148px" width="20" height="20" viewBox="0 0 20 20"><text x="0" y="13.400" font-family="Liberation Sans,sans-serif" font-size="15" font-weight="bold" fill="#36475a" transform="translate(1.300 0) scale(1.700 1.150)" >=</text></svg>
<div class="a" style="left:279px;top:144px;width:1257px;height:27px;background:#fff;border:1px solid #8a8a8a;border-top:2px solid #6e6e6e;border-right-color:#f8f8f8;border-bottom-color:#f8f8f8"></div>
<div class="a" style="left:0;top:177px;width:1542px;height:1px;background:#cccccc"></div>
<div class="a" style="left:0;top:178px;width:1542px;height:1px;background:#8a8a8a"></div>
<div class="a" id="grid">
<div class="a" style="left:0;top:0px;width:1521px;height:1px;background:#6e6e6e"></div>
<div class="a" style="left:2px;top:1px;width:1519px;height:22px;background:linear-gradient(#f8f8f8 0,#f5f5f5 45%,#efefef 55%,#eeeeee 100%)"></div>
<div class="a" style="left:2px;top:24px;width:43px;height:648px;background:linear-gradient(90deg,#efefef 0,#efefef 48%,#f5f5f5 52%,#f5f5f5)"></div>
<div class="a" style="left:0;top:0px;width:1px;height:672px;background:#b4b4b4"></div>
<div class="a" style="left:1px;top:0px;width:1px;height:672px;background:#838383"></div>
<div class="hln" style="left:46px;top:74px;width:1475px"></div>
<div class="hln" style="left:46px;top:99px;width:1475px"></div>
<div class="hln" style="left:46px;top:124px;width:1475px"></div>
<div class="hln" style="left:46px;top:149px;width:1475px"></div>
<div class="hln" style="left:46px;top:174px;width:1475px"></div>
<div class="hln" style="left:46px;top:199px;width:1475px"></div>
<div class="hln" style="left:46px;top:224px;width:1475px"></div>
<div class="hln" style="left:46px;top:249px;width:1475px"></div>
<div class="hln" style="left:46px;top:274px;width:1475px"></div>
<div class="hln" style="left:46px;top:299px;width:1475px"></div>
<div class="hln" style="left:46px;top:324px;width:1475px"></div>
<div class="hln" style="left:46px;top:349px;width:1475px"></div>
<div class="hln" style="left:46px;top:374px;width:1475px"></div>
<div class="hln" style="left:46px;top:399px;width:1475px"></div>
<div class="hln" style="left:46px;top:424px;width:1475px"></div>
<div class="hln" style="left:46px;top:449px;width:1475px"></div>
<div class="hln" style="left:46px;top:474px;width:1475px"></div>
<div class="hln" style="left:46px;top:499px;width:1475px"></div>
<div class="hln" style="left:46px;top:524px;width:1475px"></div>
<div class="hln" style="left:46px;top:549px;width:1475px"></div>
<div class="hln" style="left:46px;top:574px;width:1475px"></div>
<div class="hln" style="left:46px;top:599px;width:1475px"></div>
<div class="hln" style="left:46px;top:624px;width:1475px"></div>
<div class="hln" style="left:46px;top:649px;width:1475px"></div>
<div class="hln" style="left:46px;top:674px;width:1475px"></div>
<div class="vl" style="left:694px;top:24px;height:648px"></div>
<div class="vl" style="left:879px;top:24px;height:648px"></div>
<div class="vl" style="left:1064px;top:24px;height:648px"></div>
<div class="vl" style="left:1249px;top:24px;height:648px"></div>
<div class="vl" style="left:1434px;top:24px;height:648px"></div>
<div class="a" style="left:2px;top:22px;width:1519px;height:1px;background:#a4a4a4"></div>
<div class="a" style="left:2px;top:23px;width:1519px;height:1px;background:#9a9a9a"></div>
<div class="a" style="left:694px;top:1px;width:1px;height:22px;background:#7a7a7a"></div>
<div class="a" style="left:879px;top:1px;width:1px;height:22px;background:#7a7a7a"></div>
<div class="a" style="left:1064px;top:1px;width:1px;height:22px;background:#7a7a7a"></div>
<div class="a" style="left:1249px;top:1px;width:1px;height:22px;background:#7a7a7a"></div>
<div class="a" style="left:1434px;top:1px;width:1px;height:22px;background:#7a7a7a"></div>
<div class="a" style="left:45px;top:1px;width:1px;height:671px;background:#838383"></div>
<div class="a" style="left:2px;top:48px;width:43px;height:1px;background:#8a8a8a"></div>
<div class="a" style="left:2px;top:74px;width:43px;height:1px;background:#8a8a8a"></div>
<div class="a" style="left:2px;top:99px;width:43px;height:1px;background:#8a8a8a"></div>
<div class="a" style="left:2px;top:124px;width:43px;height:1px;background:#8a8a8a"></div>
<div class="a" style="left:2px;top:149px;width:43px;height:1px;background:#8a8a8a"></div>
<div class="a" style="left:2px;top:174px;width:43px;height:1px;background:#8a8a8a"></div>
<div class="a" style="left:2px;top:199px;width:43px;height:1px;background:#8a8a8a"></div>
<div class="a" style="left:2px;top:224px;width:43px;height:1px;background:#8a8a8a"></div>
<div class="a" style="left:2px;top:249px;width:43px;height:1px;background:#8a8a8a"></div>
<div class="a" style="left:2px;top:274px;width:43px;height:1px;background:#8a8a8a"></div>
<div class="a" style="left:2px;top:299px;width:43px;height:1px;background:#8a8a8a"></div>
<div class="a" style="left:2px;top:324px;width:43px;height:1px;background:#8a8a8a"></div>
<div class="a" style="left:2px;top:349px;width:43px;height:1px;background:#8a8a8a"></div>
<div class="a" style="left:2px;top:374px;width:43px;height:1px;background:#8a8a8a"></div>
<div class="a" style="left:2px;top:399px;width:43px;height:1px;background:#8a8a8a"></div>
<div class="a" style="left:2px;top:424px;width:43px;height:1px;background:#8a8a8a"></div>
<div class="a" style="left:2px;top:449px;width:43px;height:1px;background:#8a8a8a"></div>
<div class="a" style="left:2px;top:474px;width:43px;height:1px;background:#8a8a8a"></div>
<div class="a" style="left:2px;top:499px;width:43px;height:1px;background:#8a8a8a"></div>
<div class="a" style="left:2px;top:524px;width:43px;height:1px;background:#8a8a8a"></div>
<div class="a" style="left:2px;top:549px;width:43px;height:1px;background:#8a8a8a"></div>
<div class="a" style="left:2px;top:574px;width:43px;height:1px;background:#8a8a8a"></div>
<div class="a" style="left:2px;top:599px;width:43px;height:1px;background:#8a8a8a"></div>
<div class="a" style="left:2px;top:624px;width:43px;height:1px;background:#8a8a8a"></div>
<div class="a" style="left:2px;top:649px;width:43px;height:1px;background:#8a8a8a"></div>
<div class="a" style="left:2px;top:674px;width:43px;height:1px;background:#8a8a8a"></div>
<div class="a" style="left:2px;top:450px;width:44px;height:25px;background:linear-gradient(90deg,#5aa7e6 0,#5aa7e6 48%,#0078d7 52%,#0078d7)"></div>
<div class="a" style="left:2px;top:48px;width:1519px;height:2px;background:linear-gradient(#2a2a2a,#111)"></div>
<div class="a" style="left:508px;top:24px;width:1px;height:648px;background:#6c6c6c"></div>
<div class="a" style="left:509px;top:24px;width:1px;height:648px;background:#000"></div>
<div class="a" style="left:507px;top:1px;width:1px;height:23px;background:#5b93cf"></div>
<div class="a" style="left:508px;top:1px;width:1px;height:23px;background:#1b518f"></div>
<div class="a" style="left:509px;top:1px;width:1px;height:23px;background:#000"></div>
<div class="a" style="left:506px;top:447px;width:4px;height:29px;background:#000"></div>
<div class="t" style="left:257.6px;width:40px;text-align:center;top:4.5px;font-size:16px;transform:scaleX(1)">A</div>
<div class="t" style="left:582.6px;width:40px;text-align:center;top:4.5px;font-size:16px;transform:scaleX(0.86)">N</div>
<div class="t" style="left:767.6px;width:40px;text-align:center;top:4.5px;font-size:16px;transform:scaleX(0.86)">O</div>
<div class="t" style="left:952.6px;width:40px;text-align:center;top:4.5px;font-size:16px;transform:scaleX(0.86)">P</div>
<div class="t" style="left:1137.6px;width:40px;text-align:center;top:4.5px;font-size:16px;transform:scaleX(0.86)">Q</div>
<div class="t" style="left:1322.6px;width:40px;text-align:center;top:4.5px;font-size:16px;transform:scaleX(0.86)">R</div>
<div class="rn" style="top:29px;color:#000"><span>1</span></div>
<div class="rn" style="top:55px;color:#000"><span>941</span></div>
<div class="rn" style="top:80px;color:#000"><span>942</span></div>
<div class="rn" style="top:105px;color:#000"><span>943</span></div>
<div class="rn" style="top:130px;color:#000"><span>959</span></div>
<div class="rn" style="top:155px;color:#000"><span>960</span></div>
<div class="rn" style="top:180px;color:#000"><span>961</span></div>
<div class="rn" style="top:205px;color:#000"><span>977</span></div>
<div class="rn" style="top:230px;color:#000"><span>978</span></div>
<div class="rn" style="top:255px;color:#000"><span>979</span></div>
<div class="rn" style="top:280px;color:#000"><span>995</span></div>
<div class="rn" style="top:305px;color:#000"><span>996</span></div>
<div class="rn" style="top:330px;color:#000"><span>997</span></div>
<div class="rn" style="top:355px;color:#000"><span>1148</span></div>
<div class="rn" style="top:380px;color:#000"><span>1149</span></div>
<div class="rn" style="top:405px;color:#000"><span>1150</span></div>
<div class="rn" style="top:430px;color:#000"><span>1151</span></div>
<div class="rn" style="top:455px;color:#fff;font-weight:bold"><span>1152</span></div>
<div class="rn" style="top:480px;color:#000"><span>1153</span></div>
<div class="rn" style="top:505px;color:#000"><span>1154</span></div>
<div class="rn" style="top:530px;color:#000"><span>1155</span></div>
<div class="rn" style="top:555px;color:#000"><span>1156</span></div>
<div class="rn" style="top:580px;color:#000"><span>1157</span></div>
<div class="rn" style="top:605px;color:#000"><span>1158</span></div>
<div class="rn" style="top:630px;color:#000"><span>1159</span></div>
<div class="rn" style="top:655px;color:#000"><span>1160</span></div>
<div class="hd" style="left:168px;top:28.5px;letter-spacing:0.042px">TaxCloudTransactionID</div>
<svg class="wv" style="left:167px;top:42.599999999999994px" width="196" height="6" viewBox="0 0 196 6"><path d="M0 4.1 S3.2 1.5 4.9 1.5 S8.100000000000001 4.1 9.8 4.1 S13.0 1.5 14.700000000000001 1.5 S17.900000000000002 4.1 19.6 4.1 S22.8 1.5 24.5 1.5 S27.7 4.1 29.4 4.1 S32.6 1.5 34.3 1.5 S37.5 4.1 39.199999999999996 4.1 S42.4 1.5 44.099999999999994 1.5 S47.3 4.1 48.99999999999999 4.1 S52.199999999999996 1.5 53.89999999999999 1.5 S57.099999999999994 4.1 58.79999999999999 4.1 S61.99999999999999 1.5 63.69999999999999 1.5 S66.89999999999999 4.1 68.6 4.1 S71.8 1.5 73.5 1.5 S76.7 4.1 78.4 4.1 S81.60000000000001 1.5 83.30000000000001 1.5 S86.50000000000001 4.1 88.20000000000002 4.1 S91.40000000000002 1.5 93.10000000000002 1.5 S96.30000000000003 4.1 98.00000000000003 4.1 S101.20000000000003 1.5 102.90000000000003 1.5 S106.10000000000004 4.1 107.80000000000004 4.1 S111.00000000000004 1.5 112.70000000000005 1.5 S115.90000000000005 4.1 117.60000000000005 4.1 S120.80000000000005 1.5 122.50000000000006 1.5 S125.70000000000006 4.1 127.40000000000006 4.1 S130.60000000000005 1.5 132.30000000000007 1.5 S135.50000000000006 4.1 137.20000000000007 4.1 S140.40000000000006 1.5 142.10000000000008 1.5 S145.30000000000007 4.1 147.00000000000009 4.1 S150.20000000000007 1.5 151.9000000000001 1.5 S155.10000000000008 4.1 156.8000000000001 4.1 S160.00000000000009 1.5 161.7000000000001 1.5 S164.9000000000001 4.1 166.6000000000001 4.1 S169.8000000000001 1.5 171.5000000000001 1.5 S174.7000000000001 4.1 176.40000000000012 4.1 S179.6000000000001 1.5 181.30000000000013 1.5 S184.5000000000001 4.1 186.20000000000013 4.1 S189.40000000000012 1.5 191.10000000000014 1.5 S194.30000000000013 4.1 196.00000000000014 4.1" fill="none" stroke="#ff2a2a" stroke-width="1.5"/></svg>
<div class="dd" style="left:484px;top:25px"></div>
<div class="hd" style="left:527px;top:28.5px;letter-spacing:-0.086px">ShipToAddress</div>
<svg class="wv" style="left:526px;top:42.599999999999994px" width="128" height="6" viewBox="0 0 128 6"><path d="M0 4.1 S3.2 1.5 4.9 1.5 S8.100000000000001 4.1 9.8 4.1 S13.0 1.5 14.700000000000001 1.5 S17.900000000000002 4.1 19.6 4.1 S22.8 1.5 24.5 1.5 S27.7 4.1 29.4 4.1 S32.6 1.5 34.3 1.5 S37.5 4.1 39.199999999999996 4.1 S42.4 1.5 44.099999999999994 1.5 S47.3 4.1 48.99999999999999 4.1 S52.199999999999996 1.5 53.89999999999999 1.5 S57.099999999999994 4.1 58.79999999999999 4.1 S61.99999999999999 1.5 63.69999999999999 1.5 S66.89999999999999 4.1 68.6 4.1 S71.8 1.5 73.5 1.5 S76.7 4.1 78.4 4.1 S81.60000000000001 1.5 83.30000000000001 1.5 S86.50000000000001 4.1 88.20000000000002 4.1 S91.40000000000002 1.5 93.10000000000002 1.5 S96.30000000000003 4.1 98.00000000000003 4.1 S101.20000000000003 1.5 102.90000000000003 1.5 S106.10000000000004 4.1 107.80000000000004 4.1 S111.00000000000004 1.5 112.70000000000005 1.5 S115.90000000000005 4.1 117.60000000000005 4.1 S120.80000000000005 1.5 122.50000000000006 1.5 S125.70000000000006 4.1 127.40000000000006 4.1" fill="none" stroke="#ff2a2a" stroke-width="1.5"/></svg>
<div class="dd" style="left:671px;top:25px"></div>
<div class="hd" style="left:730px;top:28.5px;letter-spacing:0.104px">ShipToCity</div>
<svg class="wv" style="left:729px;top:42.599999999999994px" width="93" height="6" viewBox="0 0 93 6"><path d="M0 4.1 S3.2 1.5 4.9 1.5 S8.100000000000001 4.1 9.8 4.1 S13.0 1.5 14.700000000000001 1.5 S17.900000000000002 4.1 19.6 4.1 S22.8 1.5 24.5 1.5 S27.7 4.1 29.4 4.1 S32.6 1.5 34.3 1.5 S37.5 4.1 39.199999999999996 4.1 S42.4 1.5 44.099999999999994 1.5 S47.3 4.1 48.99999999999999 4.1 S52.199999999999996 1.5 53.89999999999999 1.5 S57.099999999999994 4.1 58.79999999999999 4.1 S61.99999999999999 1.5 63.69999999999999 1.5 S66.89999999999999 4.1 68.6 4.1 S71.8 1.5 73.5 1.5 S76.7 4.1 78.4 4.1 S81.60000000000001 1.5 83.30000000000001 1.5 S86.50000000000001 4.1 88.20000000000002 4.1 S91.40000000000002 1.5 93.10000000000002 1.5" fill="none" stroke="#ff2a2a" stroke-width="1.5"/></svg>
<div class="dd" style="left:856px;top:25px"></div>
<div class="hd" style="left:907px;top:28.5px;letter-spacing:0.320px">ShipToState</div>
<svg class="wv" style="left:906px;top:42.599999999999994px" width="105" height="6" viewBox="0 0 105 6"><path d="M0 4.1 S3.2 1.5 4.9 1.5 S8.100000000000001 4.1 9.8 4.1 S13.0 1.5 14.700000000000001 1.5 S17.900000000000002 4.1 19.6 4.1 S22.8 1.5 24.5 1.5 S27.7 4.1 29.4 4.1 S32.6 1.5 34.3 1.5 S37.5 4.1 39.199999999999996 4.1 S42.4 1.5 44.099999999999994 1.5 S47.3 4.1 48.99999999999999 4.1 S52.199999999999996 1.5 53.89999999999999 1.5 S57.099999999999994 4.1 58.79999999999999 4.1 S61.99999999999999 1.5 63.69999999999999 1.5 S66.89999999999999 4.1 68.6 4.1 S71.8 1.5 73.5 1.5 S76.7 4.1 78.4 4.1 S81.60000000000001 1.5 83.30000000000001 1.5 S86.50000000000001 4.1 88.20000000000002 4.1 S91.40000000000002 1.5 93.10000000000002 1.5 S96.30000000000003 4.1 98.00000000000003 4.1 S101.20000000000003 1.5 102.90000000000003 1.5 S106.10000000000004 4.1 107.80000000000004 4.1" fill="none" stroke="#ff2a2a" stroke-width="1.5"/></svg>
<div class="dd f" style="left:1041px;top:25px"></div>
<div class="hd" style="left:1082px;top:28.5px;letter-spacing:0.159px">ShipToZipcode</div>
<svg class="wv" style="left:1081px;top:42.599999999999994px" width="128" height="6" viewBox="0 0 128 6"><path d="M0 4.1 S3.2 1.5 4.9 1.5 S8.100000000000001 4.1 9.8 4.1 S13.0 1.5 14.700000000000001 1.5 S17.900000000000002 4.1 19.6 4.1 S22.8 1.5 24.5 1.5 S27.7 4.1 29.4 4.1 S32.6 1.5 34.3 1.5 S37.5 4.1 39.199999999999996 4.1 S42.4 1.5 44.099999999999994 1.5 S47.3 4.1 48.99999999999999 4.1 S52.199999999999996 1.5 53.89999999999999 1.5 S57.099999999999994 4.1 58.79999999999999 4.1 S61.99999999999999 1.5 63.69999999999999 1.5 S66.89999999999999 4.1 68.6 4.1 S71.8 1.5 73.5 1.5 S76.7 4.1 78.4 4.1 S81.60000000000001 1.5 83.30000000000001 1.5 S86.50000000000001 4.1 88.20000000000002 4.1 S91.40000000000002 1.5 93.10000000000002 1.5 S96.30000000000003 4.1 98.00000000000003 4.1 S101.20000000000003 1.5 102.90000000000003 1.5 S106.10000000000004 4.1 107.80000000000004 4.1 S111.00000000000004 1.5 112.70000000000005 1.5 S115.90000000000005 4.1 117.60000000000005 4.1 S120.80000000000005 1.5 122.50000000000006 1.5 S125.70000000000006 4.1 127.40000000000006 4.1" fill="none" stroke="#ff2a2a" stroke-width="1.5"/></svg>
<div class="dd" style="left:1226px;top:25px"></div>
<div class="hd" style="left:1256px;top:28.5px;letter-spacing:0.010px">DeliveredBySeller</div>
<svg class="wv" style="left:1255px;top:42.599999999999994px" width="150" height="6" viewBox="0 0 150 6"><path d="M0 4.1 S3.2 1.5 4.9 1.5 S8.100000000000001 4.1 9.8 4.1 S13.0 1.5 14.700000000000001 1.5 S17.900000000000002 4.1 19.6 4.1 S22.8 1.5 24.5 1.5 S27.7 4.1 29.4 4.1 S32.6 1.5 34.3 1.5 S37.5 4.1 39.199999999999996 4.1 S42.4 1.5 44.099999999999994 1.5 S47.3 4.1 48.99999999999999 4.1 S52.199999999999996 1.5 53.89999999999999 1.5 S57.099999999999994 4.1 58.79999999999999 4.1 S61.99999999999999 1.5 63.69999999999999 1.5 S66.89999999999999 4.1 68.6 4.1 S71.8 1.5 73.5 1.5 S76.7 4.1 78.4 4.1 S81.60000000000001 1.5 83.30000000000001 1.5 S86.50000000000001 4.1 88.20000000000002 4.1 S91.40000000000002 1.5 93.10000000000002 1.5 S96.30000000000003 4.1 98.00000000000003 4.1 S101.20000000000003 1.5 102.90000000000003 1.5 S106.10000000000004 4.1 107.80000000000004 4.1 S111.00000000000004 1.5 112.70000000000005 1.5 S115.90000000000005 4.1 117.60000000000005 4.1 S120.80000000000005 1.5 122.50000000000006 1.5 S125.70000000000006 4.1 127.40000000000006 4.1 S130.60000000000005 1.5 132.30000000000007 1.5 S135.50000000000006 4.1 137.20000000000007 4.1 S140.40000000000006 1.5 142.10000000000008 1.5 S145.30000000000007 4.1 147.00000000000009 4.1 S150.20000000000007 1.5 151.9000000000001 1.5" fill="none" stroke="#ff2a2a" stroke-width="1.5"/></svg>
<div class="dd" style="left:1411px;top:25px"></div>
<div class="hd" style="left:1499px;top:28.5px;transform:scaleX(.92);transform-origin:0 0;letter-spacing:-.5px;-webkit-text-stroke:.35px #000">LiveTransaction</div>
<div class="c" style="left:111.0px;top:55px;letter-spacing:0.460px;text-align:left">f1345bcf-dd3c-e811-8130-0ef001d5d49d</div>
<div class="c" style="left:529.4px;top:55px;letter-spacing:0.731px;text-align:left">10110</div>
<div class="c" style="left:585.0px;top:55px;letter-spacing:-0.726px;text-align:left">MARSH</div>
<div class="c" style="left:649.6px;top:55px;letter-spacing:-0.881px;text-align:left">RD</div>
<div class="c" style="left:730.5px;top:55px;letter-spacing:-0.822px;text-align:left">FOWLERVILLE</div>
<div class="c" style="left:962.5px;top:55px;letter-spacing:0.547px;text-align:left">MI</div>
<div class="c" style="left:1112.5px;top:55px;letter-spacing:0.299px;text-align:left">488369312</div>
<div class="c" style="left:1320.5px;top:55px;letter-spacing:-1.214px;text-align:left">TRUE</div>
<div class="c" style="left:1505.5px;top:55px;letter-spacing:-1.214px;text-align:left">TRUE</div>
<div class="c" style="left:111.0px;top:80px;letter-spacing:0.460px;text-align:left">f0345bcf-dd3c-e811-8130-0ef001d5d49d</div>
<div class="c" style="left:529.4px;top:80px;letter-spacing:0.731px;text-align:left">10110</div>
<div class="c" style="left:585.0px;top:80px;letter-spacing:-0.726px;text-align:left">MARSH</div>
<div class="c" style="left:649.6px;top:80px;letter-spacing:-0.881px;text-align:left">RD</div>
<div class="c" style="left:730.5px;top:80px;letter-spacing:-0.822px;text-align:left">FOWLERVILLE</div>
<div class="c" style="left:962.5px;top:80px;letter-spacing:0.547px;text-align:left">MI</div>
<div class="c" style="left:1112.5px;top:80px;letter-spacing:0.299px;text-align:left">488369312</div>
<div class="c" style="left:1320.5px;top:80px;letter-spacing:-1.214px;text-align:left">TRUE</div>
<div class="c" style="left:1505.5px;top:80px;letter-spacing:-1.214px;text-align:left">TRUE</div>
<div class="c" style="left:111.0px;top:105px;letter-spacing:0.321px;text-align:left">ea345bcf-dd3c-e811-8130-0ef001d5d49d</div>
<div class="c" style="left:529.4px;top:105px;letter-spacing:0.731px;text-align:left">10110</div>
<div class="c" style="left:585.0px;top:105px;letter-spacing:-0.726px;text-align:left">MARSH</div>
<div class="c" style="left:649.6px;top:105px;letter-spacing:-0.881px;text-align:left">RD</div>
<div class="c" style="left:730.5px;top:105px;letter-spacing:-0.822px;text-align:left">FOWLERVILLE</div>
<div class="c" style="left:962.5px;top:105px;letter-spacing:0.547px;text-align:left">MI</div>
<div class="c" style="left:1112.5px;top:105px;letter-spacing:0.299px;text-align:left">488369312</div>
<div class="c" style="left:1320.5px;top:105px;letter-spacing:-1.214px;text-align:left">TRUE</div>
<div class="c" style="left:1505.5px;top:105px;letter-spacing:-1.214px;text-align:left">TRUE</div>
<div class="c" style="left:111.0px;top:130px;letter-spacing:0.460px;text-align:left">f1345bcf-dd3c-e811-8130-0ef001d5d49d</div>
<div class="c" style="left:529.4px;top:130px;letter-spacing:0.731px;text-align:left">10110</div>
<div class="c" style="left:585.0px;top:130px;letter-spacing:-0.726px;text-align:left">MARSH</div>
<div class="c" style="left:649.6px;top:130px;letter-spacing:-0.881px;text-align:left">RD</div>
<div class="c" style="left:730.5px;top:130px;letter-spacing:-0.822px;text-align:left">FOWLERVILLE</div>
<div class="c" style="left:962.5px;top:130px;letter-spacing:0.547px;text-align:left">MI</div>
<div class="c" style="left:1112.5px;top:130px;letter-spacing:0.299px;text-align:left">488369312</div>
<div class="c" style="left:1320.5px;top:130px;letter-spacing:-1.214px;text-align:left">TRUE</div>
<div class="c" style="left:1505.5px;top:130px;letter-spacing:-1.214px;text-align:left">TRUE</div>
<div class="c" style="left:111.0px;top:155px;letter-spacing:0.460px;text-align:left">f0345bcf-dd3c-e811-8130-0ef001d5d49d</div>
<div class="c" style="left:529.4px;top:155px;letter-spacing:0.731px;text-align:left">10110</div>
<div class="c" style="left:585.0px;top:155px;letter-spacing:-0.726px;text-align:left">MARSH</div>
<div class="c" style="left:649.6px;top:155px;letter-spacing:-0.881px;text-align:left">RD</div>
<div class="c" style="left:730.5px;top:155px;letter-spacing:-0.822px;text-align:left">FOWLERVILLE</div>
<div class="c" style="left:962.5px;top:155px;letter-spacing:0.547px;text-align:left">MI</div>
<div class="c" style="left:1112.5px;top:155px;letter-spacing:0.299px;text-align:left">488369312</div>
<div class="c" style="left:1320.5px;top:155px;letter-spacing:-1.214px;text-align:left">TRUE</div>
<div class="c" style="left:1505.5px;top:155px;letter-spacing:-1.214px;text-align:left">TRUE</div>
<div class="c" style="left:111.0px;top:180px;letter-spacing:0.321px;text-align:left">ea345bcf-dd3c-e811-8130-0ef001d5d49d</div>
<div class="c" style="left:529.4px;top:180px;letter-spacing:0.731px;text-align:left">10110</div>
<div class="c" style="left:585.0px;top:180px;letter-spacing:-0.726px;text-align:left">MARSH</div>
<div class="c" style="left:649.6px;top:180px;letter-spacing:-0.881px;text-align:left">RD</div>
<div class="c" style="left:730.5px;top:180px;letter-spacing:-0.822px;text-align:left">FOWLERVILLE</div>
<div class="c" style="left:962.5px;top:180px;letter-spacing:0.547px;text-align:left">MI</div>
<div class="c" style="left:1112.5px;top:180px;letter-spacing:0.299px;text-align:left">488369312</div>
<div class="c" style="left:1320.5px;top:180px;letter-spacing:-1.214px;text-align:left">TRUE</div>
<div class="c" style="left:1505.5px;top:180px;letter-spacing:-1.214px;text-align:left">TRUE</div>
<div class="c" style="left:111.0px;top:205px;letter-spacing:0.460px;text-align:left">f1345bcf-dd3c-e811-8130-0ef001d5d49d</div>
<div class="c" style="left:529.4px;top:205px;letter-spacing:0.731px;text-align:left">10110</div>
<div class="c" style="left:585.0px;top:205px;letter-spacing:-0.726px;text-align:left">MARSH</div>
<div class="c" style="left:649.6px;top:205px;letter-spacing:-0.881px;text-align:left">RD</div>
<div class="c" style="left:730.5px;top:205px;letter-spacing:-0.822px;text-align:left">FOWLERVILLE</div>
<div class="c" style="left:962.5px;top:205px;letter-spacing:0.547px;text-align:left">MI</div>
<div class="c" style="left:1112.5px;top:205px;letter-spacing:0.299px;text-align:left">488369312</div>
<div class="c" style="left:1320.5px;top:205px;letter-spacing:-1.214px;text-align:left">TRUE</div>
<div class="c" style="left:1505.5px;top:205px;letter-spacing:-1.214px;text-align:left">TRUE</div>
<div class="c" style="left:111.0px;top:230px;letter-spacing:0.460px;text-align:left">f0345bcf-dd3c-e811-8130-0ef001d5d49d</div>
<div class="c" style="left:529.4px;top:230px;letter-spacing:0.731px;text-align:left">10110</div>
<div class="c" style="left:585.0px;top:230px;letter-spacing:-0.726px;text-align:left">MARSH</div>
<div class="c" style="left:649.6px;top:230px;letter-spacing:-0.881px;text-align:left">RD</div>
<div class="c" style="left:730.5px;top:230px;letter-spacing:-0.822px;text-align:left">FOWLERVILLE</div>
<div class="c" style="left:962.5px;top:230px;letter-spacing:0.547px;text-align:left">MI</div>
<div class="c" style="left:1112.5px;top:230px;letter-spacing:0.299px;text-align:left">488369312</div>
<div class="c" style="left:1320.5px;top:230px;letter-spacing:-1.214px;text-align:left">TRUE</div>
<div class="c" style="left:1505.5px;top:230px;letter-spacing:-1.214px;text-align:left">TRUE</div>
<div class="c" style="left:111.0px;top:255px;letter-spacing:0.321px;text-align:left">ea345bcf-dd3c-e811-8130-0ef001d5d49d</div>
<div class="c" style="left:529.4px;top:255px;letter-spacing:0.731px;text-align:left">10110</div>
<div class="c" style="left:585.0px;top:255px;letter-spacing:-0.726px;text-align:left">MARSH</div>
<div class="c" style="left:649.6px;top:255px;letter-spacing:-0.881px;text-align:left">RD</div>
<div class="c" style="left:730.5px;top:255px;letter-spacing:-0.822px;text-align:left">FOWLERVILLE</div>
<div class="c" style="left:962.5px;top:255px;letter-spacing:0.547px;text-align:left">MI</div>
<div class="c" style="left:1112.5px;top:255px;letter-spacing:0.299px;text-align:left">488369312</div>
<div class="c" style="left:1320.5px;top:255px;letter-spacing:-1.214px;text-align:left">TRUE</div>
<div class="c" style="left:1505.5px;top:255px;letter-spacing:-1.214px;text-align:left">TRUE</div>
<div class="c" style="left:111.0px;top:280px;letter-spacing:0.460px;text-align:left">f1345bcf-dd3c-e811-8130-0ef001d5d49d</div>
<div class="c" style="left:529.4px;top:280px;letter-spacing:0.731px;text-align:left">10110</div>
<div class="c" style="left:585.0px;top:280px;letter-spacing:-0.726px;text-align:left">MARSH</div>
<div class="c" style="left:649.6px;top:280px;letter-spacing:-0.881px;text-align:left">RD</div>
<div class="c" style="left:730.5px;top:280px;letter-spacing:-0.822px;text-align:left">FOWLERVILLE</div>
<div class="c" style="left:962.5px;top:280px;letter-spacing:0.547px;text-align:left">MI</div>
<div class="c" style="left:1112.5px;top:280px;letter-spacing:0.299px;text-align:left">488369312</div>
<div class="c" style="left:1320.5px;top:280px;letter-spacing:-1.214px;text-align:left">TRUE</div>
<div class="c" style="left:1505.5px;top:280px;letter-spacing:-1.214px;text-align:left">TRUE</div>
<div class="c" style="left:111.0px;top:305px;letter-spacing:0.460px;text-align:left">f0345bcf-dd3c-e811-8130-0ef001d5d49d</div>
<div class="c" style="left:529.4px;top:305px;letter-spacing:0.731px;text-align:left">10110</div>
<div class="c" style="left:585.0px;top:305px;letter-spacing:-0.726px;text-align:left">MARSH</div>
<div class="c" style="left:649.6px;top:305px;letter-spacing:-0.881px;text-align:left">RD</div>
<div class="c" style="left:730.5px;top:305px;letter-spacing:-0.822px;text-align:left">FOWLERVILLE</div>
<div class="c" style="left:962.5px;top:305px;letter-spacing:0.547px;text-align:left">MI</div>
<div class="c" style="left:1112.5px;top:305px;letter-spacing:0.299px;text-align:left">488369312</div>
<div class="c" style="left:1320.5px;top:305px;letter-spacing:-1.214px;text-align:left">TRUE</div>
<div class="c" style="left:1505.5px;top:305px;letter-spacing:-1.214px;text-align:left">TRUE</div>
<div class="c" style="left:111.0px;top:330px;letter-spacing:0.321px;text-align:left">ea345bcf-dd3c-e811-8130-0ef001d5d49d</div>
<div class="c" style="left:529.4px;top:330px;letter-spacing:0.731px;text-align:left">10110</div>
<div class="c" style="left:585.0px;top:330px;letter-spacing:-0.726px;text-align:left">MARSH</div>
<div class="c" style="left:649.6px;top:330px;letter-spacing:-0.881px;text-align:left">RD</div>
<div class="c" style="left:730.5px;top:330px;letter-spacing:-0.822px;text-align:left">FOWLERVILLE</div>
<div class="c" style="left:962.5px;top:330px;letter-spacing:0.547px;text-align:left">MI</div>
<div class="c" style="left:1112.5px;top:330px;letter-spacing:0.299px;text-align:left">488369312</div>
<div class="c" style="left:1320.5px;top:330px;letter-spacing:-1.214px;text-align:left">TRUE</div>
<div class="c" style="left:1505.5px;top:330px;letter-spacing:-1.214px;text-align:left">TRUE</div>
</div>
<!-- right of grid: vertical scrollbar -->
<div class="a" style="left:1520px;top:179px;width:22px;height:672px;background:#f0f0f0"></div>
<div class="a" style="left:1522px;top:202px;width:18px;height:312px;background:#cdcdcd"></div>
<svg class="ic" style="left:1525px;top:187px" width="12" height="8" viewBox="0 0 12 8"><path d="M1.800 6.500l4-4.500 4 4.500" fill="none" stroke="#5a5a5a" stroke-width="2"/></svg>
<svg class="ic" style="left:1525px;top:836px" width="12" height="8" viewBox="0 0 12 8"><path d="M1.800 1.500l4 4.500 4-4.500" fill="none" stroke="#5a5a5a" stroke-width="2"/></svg>
<!-- splitter dots -->
<div class="a" style="left:1542px;top:137px;width:8px;height:735px;background:#f0f0f0"></div>
<div class="a" style="left:1542px;top:137px;width:2px;height:735px;background:#fafafa"></div>
<svg class="ic" style="left:1544px;top:481px" width="5" height="46" viewBox="0 0 5 46"><g fill="#6a6a6a"><path d="M.5 1l3.500 2.500-3.500 2.500z"/><path d="M.5 39.500l3.500 2.500-3.500 2.500z"/><rect x="1" y="11" width="1.500" height="1.500"/><rect x="1" y="15.500" width="1.500" height="1.500"/><rect x="1" y="20" width="1.500" height="1.500"/><rect x="1" y="24.500" width="1.500" height="1.500"/><rect x="1" y="29" width="1.500" height="1.500"/><rect x="1" y="33" width="1.500" height="1.500"/></g></svg>
<div class="a" style="left:1520px;top:179px;width:22px;height:1px;background:#6e6e6e"></div>
<div class="a" style="left:1542px;top:136px;width:9px;height:2px;background:#b2b2b2"></div>
<!-- sidebar tab bar -->
<div class="a" id="sidebar" style="left:1550px;top:137px;width:49px;height:735px;background:#f0f0f0;border:1px solid #a4a4a4;border-top-color:#b2b2b2"></div>
<div class="a" style="left:1599px;top:137px;width:1px;height:735px;background:#e6e6e6"></div>
<svg class="ic" style="left:1569.500px;top:156px" width="13" height="12" viewBox="0 0 13 12"><path d="M0 1h8M0 3.500h8M0 6h8" stroke="#6f7c94" stroke-width="1.300"/><path d="M5 8h7l-3.500 3.800z" fill="#1d2a44"/></svg>
<div class="a" style="left:1561px;top:185px;width:29px;height:1px;background:#d9d9d9"></div>
<div class="a" style="left:1555px;top:190px;width:40px;height:40px;border:1px solid #a3a3a3;border-radius:5px;background:#f3f3f3"></div>
<!-- properties cubes -->
<svg class="ic" style="left:1560px;top:194px" width="30" height="32" viewBox="0 0 30 32">
<ellipse cx="15" cy="28" rx="11" ry="2.500" fill="#bdbdbd"/>
<path d="M3 8l7-4 6 2.500v8l-5 3v8l-8-4z" fill="#21a0f2"/>
<path d="M3 8l7-4 7 3-7 3.500z" fill="#6ccbff"/>
<path d="M10 4l5-2.500 6 2.500-5 2.500z" fill="#3fc0f5"/>
<path d="M16 6.500l5-2 6 3v16l-10 5-6-3v-8l5-3z" fill="#6fd321"/>
<path d="M21 4.500l6 3-5 2.500-6-3z" fill="#a5ec56"/>
<path d="M11 17.500l6-3 5 2.500-5.500 3z" fill="#b4f06c"/>
<path d="M3 14.500l8 3.500M10 10.500v7M22 10v6.500M22 17l5-2.500M16.500 20v8.500M16 7v7.500" stroke="#fff" stroke-width="1" opacity=".75" fill="none"/>
</svg>
<!-- styles -->
<svg class="ic" style="left:1560px;top:238px" width="32" height="32" viewBox="0 0 32 32">
<ellipse cx="15" cy="28.500" rx="11" ry="2" fill="#c4c4c4"/>
<path d="M7 26l5.500-18c5 1 9 4.500 10.500 9.500z" fill="#2d8fe3"/>
<path d="M12.500 8c5-1.500 10 3 10.500 9.500-4 1-8-.5-10-4z" fill="#0d2740"/>
<path d="M4 6c2-4 7-4 9-1-1 2-2 4-1.500 6-3-3-6-2-7.500-5z" fill="#d96a12"/>
<path d="M16 22c2-4 6-4 9-2 1 3-1 6-4 6.500 1-2 0-4-5-4.500z" fill="#57b52a"/>
<path d="M14 12c3 0 5 2 5 5" fill="none" stroke="#6bd0ff" stroke-width="1.500"/>
<path d="M26 1.500l1.500 3 3.300.4-2.400 2.300.6 3.300-3-1.600-3 1.600.6-3.300-2.400-2.300 3.300-.4z" fill="#f7c531"/>
<path d="M18 .5l1.100 2.100 2.400.3-1.700 1.700.4 2.400-2.200-1.200-2.100 1.200.4-2.400-1.700-1.700 2.300-.3z" fill="#c45ce0"/>
<path d="M4 11.500l1.100 2.100 2.400.3-1.700 1.700.4 2.400-2.200-1.200-2.100 1.200.4-2.400-1.700-1.700 2.300-.3z" fill="#f0569a"/>
<path d="M27 12.500l1 1.900 2.200.3-1.600 1.500.4 2.200-2-1.100-1.900 1.100.4-2.200-1.600-1.500 2.100-.3z" fill="#f2445a"/>
</svg>
<!-- gallery -->
<svg class="ic" style="left:1559px;top:281px" width="33" height="34" viewBox="0 0 33 34">
<ellipse cx="17" cy="31" rx="11" ry="2" fill="#c6c6c6"/>
<path d="M3 8l20-6 7 15-19 8z" fill="#f6f6f6" stroke="#d0d0d0" stroke-width=".8"/>
<path d="M1.500 5.500l20-4 6 14-20 7z" fill="#fdfdfd" stroke="#cfcfcf" stroke-width=".8" transform="translate(1 3) rotate(-5 15 12)"/>
<path d="M6 9.500l15-4.500 4.500 9.500-15.500 5.500z" fill="#7cc4f4"/>
<path d="M4.500 7l7-2-6 4z" fill="#7ed321"/>
<path d="M8 16l16-5 1.500 3.500-15.500 5.500z" fill="#5cb52a"/>
<path d="M9 11.500l5-1.500M9 11.500l1.500 5" stroke="#1b4fa0" stroke-width="1.800" fill="none"/>
<path d="M12 14l2-.7 1 3.500-2 .7z" fill="#d9822b"/>
<path d="M17 12.500l5-1.700.5 1.500-5 1.700z" fill="#8a4b1a"/>
</svg>
<!-- navigator -->
<svg class="ic" style="left:1560px;top:325px" width="31" height="34" viewBox="0 0 31 34">
<ellipse cx="15.500" cy="31.500" rx="11" ry="1.800" fill="#cacaca"/>
<circle cx="15.500" cy="15.500" r="13" fill="#fbfbfb" stroke="#f5a21b" stroke-width="3.200"/>
<circle cx="15.500" cy="15.500" r="11.300" fill="none" stroke="#e0e0e0" stroke-width="1"/>
<text x="15.500" y="9.500" font-family="Liberation Sans,sans-serif" font-size="6.500" font-weight="bold" fill="#333" text-anchor="middle">N</text>
<path d="M23 8l-5 10-5-5z" fill="#e8343a"/>
<path d="M8 23l5-10 5 5z" fill="#2f7fe6"/>
<circle cx="15.500" cy="15.500" r="1.300" fill="#fff"/>
</svg>
<!-- functions -->
<svg class="ic" style="left:1560px;top:368px" width="32" height="34" viewBox="0 0 32 34">
<ellipse cx="18" cy="30.500" rx="11" ry="1.800" fill="#cccccc"/>
<path d="M9.500 2.500h13l6 6v19h-19z" fill="#d8e8fb" stroke="#2f9be6" stroke-width="1.400"/>
<path d="M22.500 2.500v6h6" fill="#fff" stroke="#2f9be6" stroke-width="1.200"/>
<text x="1" y="25" font-family="Liberation Serif,serif" font-size="27" font-style="italic" fill="#2a477c">f</text>
<text x="11" y="25.500" font-family="Liberation Sans,sans-serif" font-size="17" fill="#2a477c">x</text>
</svg>
<!-- tab bar -->
<div class="a" style="left:0;top:851px;width:1542px;height:21px;background:#f0f0f0"></div>
<div class="a" style="left:0;top:851px;width:1px;height:21px;background:#b4b4b4"></div>
<div class="a" style="left:1px;top:851px;width:1px;height:20px;background:#838383"></div>
<svg class="ic" style="left:0;top:850px" width="776" height="22" viewBox="0 0 776 22">
<path d="M88 .5l7.500 20h248l7.500-20" fill="#fff" stroke="#333" stroke-width="1.100"/>
<path d="M351 .5h416.500" stroke="#333" stroke-width="1"/>
<path d="M767.500 .5v20.500h6.500v-20.500" fill="#f4f4f4" stroke="#6a6a6a" stroke-width="1.200"/>
<g fill="#e4e4e4" stroke="#b0b0b0"><rect x="5.500" y="1.500" width="17" height="18"/><rect x="25.500" y="1.500" width="17" height="18"/><rect x="46.500" y="1.500" width="17" height="18"/><rect x="67.500" y="1.500" width="17" height="18"/></g>
<g fill="#000"><rect x="9" y="6" width="1.600" height="9"/><path d="M18 6v9l-6-4.500z"/><path d="M37 6v9l-6-4.500z"/><path d="M52 6v9l6-4.500z"/><path d="M72 6v9l6-4.500z"/><rect x="79.400" y="6" width="1.600" height="9"/></g>
</svg>
<svg class="ic" style="left:780px;top:855px" width="9" height="12" viewBox="0 0 9 12"><path d="M7 1.500l-4.500 4.500 4.500 4.500" fill="none" stroke="#505050" stroke-width="2"/></svg>
<svg class="ic" style="left:1505px;top:855px" width="9" height="12" viewBox="0 0 9 12"><path d="M2 1.500l4.500 4.500-4.500 4.500" fill="none" stroke="#505050" stroke-width="2"/></svg>
<div class="a" style="left:967px;top:851px;width:72px;height:19px;background:#cdcdcd"></div>
<!-- status bar -->
<div class="a" style="left:0;top:872px;width:1600px;height:26px;background:#f0f0f0;border-top:1px solid #e2e2e2"></div>
<div class="sbd" style="left:301px"></div><div class="sbd" style="left:810px"></div><div class="sbd" style="left:878px"></div><div class="sbd" style="left:920px"></div><div class="sbd" style="left:940px"></div><div class="sbd" style="left:976px"></div><div class="sbd" style="left:1359px"></div><div class="sbd" style="left:1550px"></div>
<svg class="ic" style="left:1364px;top:879px" width="180" height="18" viewBox="0 0 180 18">
<path d="M22 7.500h134" stroke="#a6a6a6" stroke-width="1.200"/><path d="M22 8.500h134" stroke="#dcdcdc" stroke-width="1"/>
<path d="M87 2.500v3" stroke="#6a7a8a" stroke-width="1"/>
<circle cx="9" cy="9" r="6.600" fill="#dce9f7" stroke="#55606b" stroke-width="1.500"/><path d="M5.500 9h7" stroke="#1f5fa8" stroke-width="2"/>
<circle cx="169" cy="9" r="6.600" fill="#dce9f7" stroke="#55606b" stroke-width="1.500"/><path d="M165.500 9h7M169 5.500v7" stroke="#1f5fa8" stroke-width="2"/>
<circle cx="87" cy="9.200" r="4.700" fill="#5f8ab3" stroke="#34516e" stroke-width="1.200"/>
<path d="M84.500 7.500c1-1.500 3.500-1.800 5-.3" fill="none" stroke="#a9c6e0" stroke-width="1"/>
</svg>
<div class="a" style="left:0;top:897px;width:1600px;height:1px;background:#b8b8b8"></div>
<div class="a" style="left:0;top:898px;width:1600px;height:2px;background:#fafafa"></div>
<div class="a" style="left:0;top:898px;width:60px;height:2px;background:#0a0a0a"></div>
<div class="a" style="left:490px;top:897px;width:1110px;height:1px;background:#6f6f6f"></div>
<div class="a" style="left:490px;top:898px;width:1110px;height:2px;background:#0a0a0a"></div>
<div class="a" style="left:926px;top:898px;width:61px;height:2px;background:#505050"></div>
<div class="t" id="title" style="left:27.0px;top:7.03px;font-size:15.2px;letter-spacing:-0.280px;color:#000">OMG.xls - OpenOffice Calc</div>
<div class="t" style="left:7.8px;top:35.86px;font-size:14.7px;letter-spacing:-0.157px;color:#000"><u>F</u>ile</div>
<div class="t" style="left:45.0px;top:35.86px;font-size:14.7px;letter-spacing:0.129px;color:#000"><u>E</u>dit</div>
<div class="t" style="left:85.0px;top:35.86px;font-size:14.7px;letter-spacing:0.207px;color:#000"><u>V</u>iew</div>
<div class="t" style="left:131.2px;top:35.86px;font-size:14.7px;letter-spacing:-0.047px;color:#000"><u>I</u>nsert</div>
<div class="t" style="left:183.2px;top:35.86px;font-size:14.7px;letter-spacing:0.137px;color:#000">F<u>o</u>rmat</div>
<div class="t" style="left:245.0px;top:35.86px;font-size:14.7px;letter-spacing:0.676px;color:#000"><u>T</u>ools</div>
<div class="t" style="left:296.0px;top:35.86px;font-size:14.7px;letter-spacing:-0.110px;color:#000"><u>D</u>ata</div>
<div class="t" style="left:341.0px;top:35.86px;font-size:14.7px;letter-spacing:0.850px;color:#000"><u>W</u>indow</div>
<div class="t" style="left:411.5px;top:35.86px;font-size:14.7px;letter-spacing:0.427px;color:#000"><u>H</u>elp</div>
<div class="t" style="left:1029.7px;top:70.76px;font-size:14.7px;letter-spacing:-0.426px;color:#8f8f8f">Find</div>
<div class="t" style="left:62.0px;top:109.80px;font-size:15px;letter-spacing:0.014px;color:#000">Calibri</div>
<div class="t" style="left:264.4px;top:109.80px;font-size:15px;letter-spacing:-1.387px;color:#000">12</div>
<div class="t" style="left:13.0px;top:151.07px;font-size:14.8px;letter-spacing:-0.526px;color:#000">B1152</div>
<div class="t" id="tabname" style="left:100.0px;top:853.86px;font-size:14.7px;letter-spacing:0.432px;color:#000;font-weight:bold">96462.20180401-20180430.detail.</div>
<div class="t" style="left:13.0px;top:880.93px;font-size:14.5px;letter-spacing:-0.164px;color:#000">Sheet 1 / 1</div>
<div class="t" style="left:309.0px;top:880.93px;font-size:14.5px;letter-spacing:-0.342px;color:#000">PageStyle_96462.20180401-20180430.detail.</div>
<div class="t" style="left:884.2px;top:880.93px;font-size:14.5px;letter-spacing:-1.350px;color:#000">STD</div>
<div class="t" style="left:925.5px;top:880.93px;font-size:14.5px;letter-spacing:0.000px;color:#000">*</div>
<div class="t" style="left:1142.0px;top:880.93px;font-size:14.5px;letter-spacing:0.810px;color:#000">Sum=0</div>
<div class="t" style="left:1553.3px;top:880.90px;font-size:15px;letter-spacing:-0.962px;color:#000">100 %</div>
<div class="a" id="toast" style="left:1125px;top:685px;width:455px;height:150px;background:#464646;border:1px solid #3b3b3b"></div>
<svg class="ic" style="left:1154px;top:725px" width="42" height="40" viewBox="0 0 42 40"><g fill="#fff">
<path d="M0.800 7.600l10.300-6.600 10.300 6.600-10.300 6.600z"/><path d="M21.400 7.600l10.300-6.600 10.300 6.600-10.300 6.600z" transform="translate(-.8 0)"/>
<path d="M0.800 21.600l10.300-6.600 10.300 6.600-10.300 6.600z"/><path d="M20.600 21.600l10.300-6.600 10.300 6.600-10.300 6.600z"/>
<path d="M10.600 32l10.300-6.600 10.300 6.600-10.300 6.600z"/></g></svg>
<div class="t" style="left:1224.5px;top:715.31px;font-size:17px;letter-spacing:0.388px;color:#fff;font-weight:bold">Screenshot Added</div>
<div class="t" style="left:1224.5px;top:740.31px;font-size:17px;letter-spacing:0.837px;color:#a6a6a6">A screenshot was added to your</div>
<div class="t" style="left:1224.5px;top:765.41px;font-size:17px;letter-spacing:0.931px;color:#a6a6a6">Dropbox.</div>
<div class="t" style="left:1224.5px;top:793.62px;font-size:13.8px;letter-spacing:0.941px;color:#b0b0b0">Dropbox</div>
</body></html>
